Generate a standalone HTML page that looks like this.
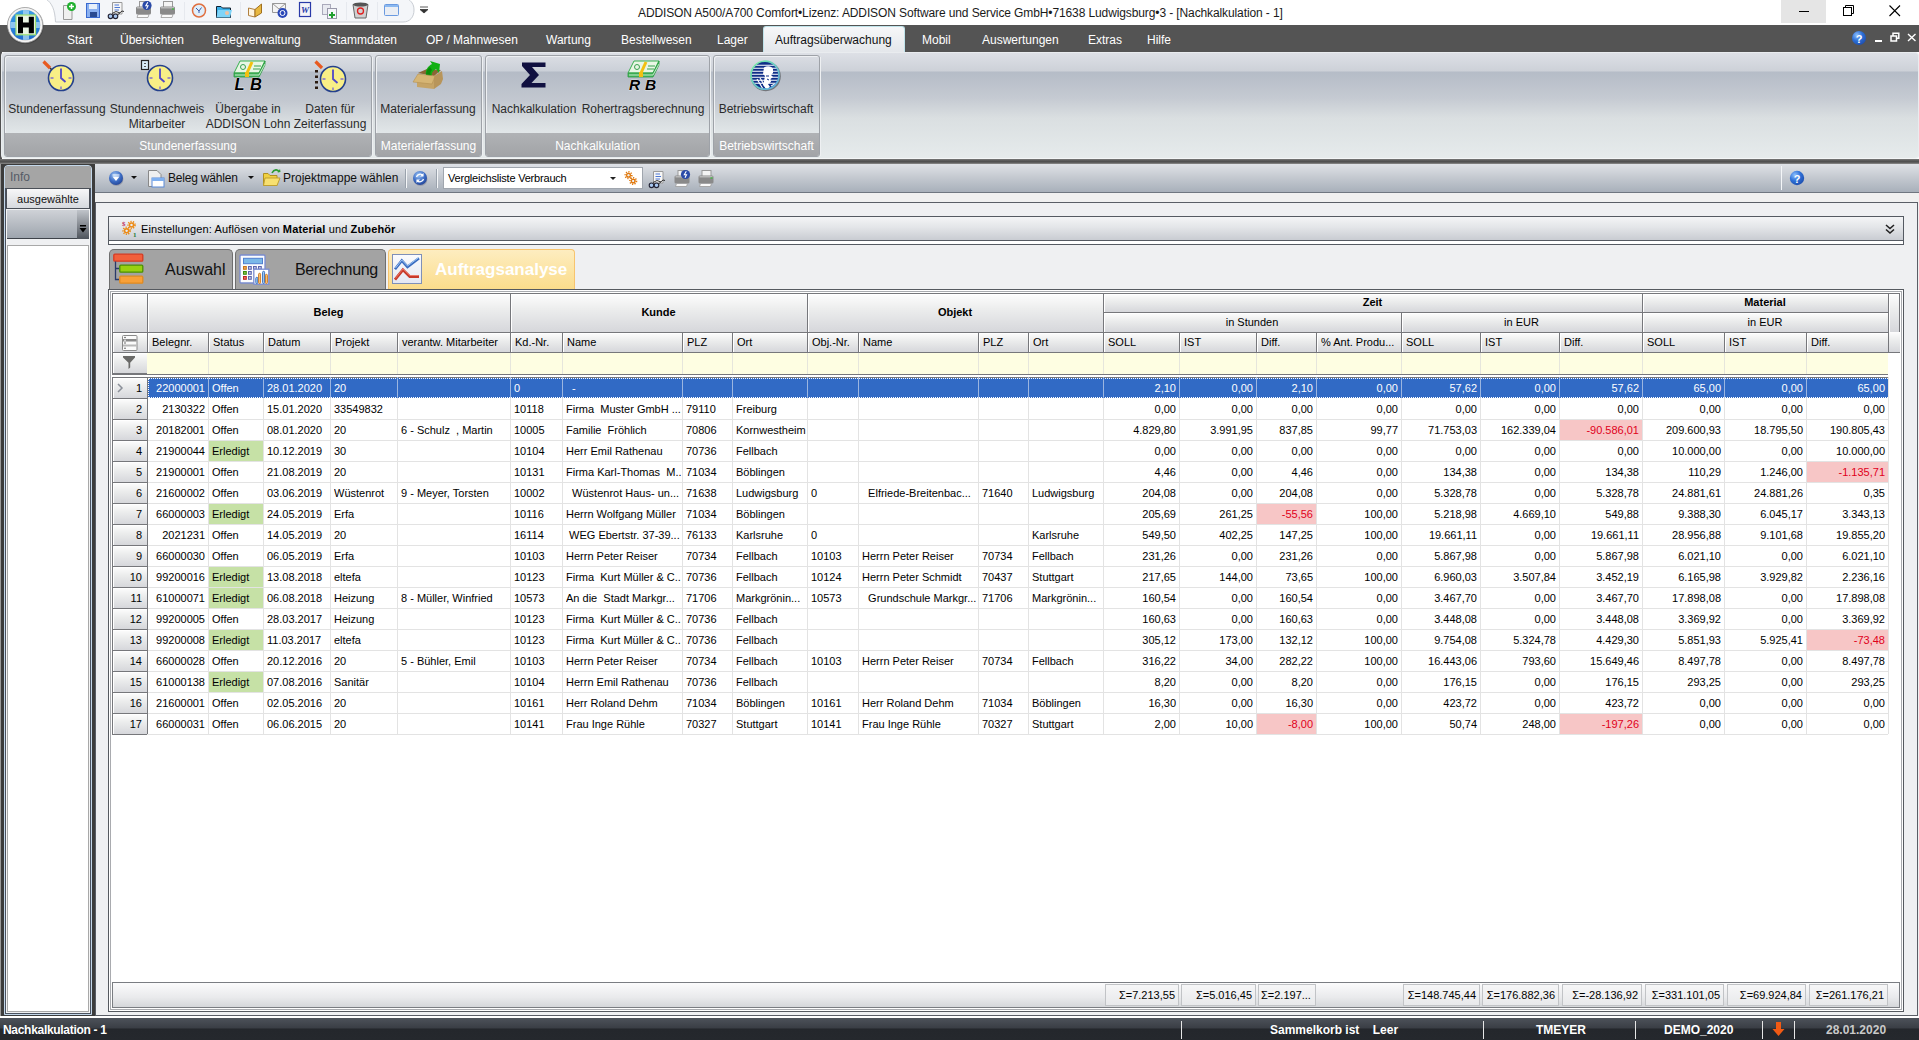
<!DOCTYPE html><html><head><meta charset="utf-8"><style>
*{margin:0;padding:0;box-sizing:border-box}
html,body{width:1919px;height:1040px;overflow:hidden;background:#fff;font-family:"Liberation Sans",sans-serif;position:relative}
.a{position:absolute}
.t{position:absolute;white-space:pre;line-height:1}
</style></head><body>
<div class="a" style="left:0;top:0;width:1919px;height:25px;background:#fff"></div>
<div class="t" style="left:638px;top:7px;font-size:12px;color:#1a1a1a;letter-spacing:-0.11px">ADDISON A500/A700 Comfort•Lizenz: ADDISON Software und Service GmbH•71638 Ludwigsburg•3 - [Nachkalkulation - 1]</div>
<div class="a" style="left:1781px;top:0;width:45px;height:23px;background:#e5e5e5"></div>
<div class="a" style="left:1799px;top:11px;width:10px;height:1px;background:#000"></div>
<svg class="a" style="left:1843px;top:5px" width="12" height="12"><rect x="0.5" y="2.5" width="8" height="8" fill="none" stroke="#000"/><path d="M2.5 2.5V0.5H10.5V8.5H8.5" fill="none" stroke="#000"/></svg>
<svg class="a" style="left:1889px;top:5px" width="12" height="12"><path d="M0.5 0.5L11 11M11 0.5L0.5 11" stroke="#000" stroke-width="1.1"/></svg>
<div class="a" style="left:0;top:25px;width:1919px;height:27px;background:#545454"></div>
<div class="t" style="left:67px;top:34px;font-size:12px;color:#fff">Start</div>
<div class="t" style="left:120px;top:34px;font-size:12px;color:#fff">Übersichten</div>
<div class="t" style="left:212px;top:34px;font-size:12px;color:#fff">Belegverwaltung</div>
<div class="t" style="left:329px;top:34px;font-size:12px;color:#fff">Stammdaten</div>
<div class="t" style="left:426px;top:34px;font-size:12px;color:#fff">OP / Mahnwesen</div>
<div class="t" style="left:546px;top:34px;font-size:12px;color:#fff">Wartung</div>
<div class="t" style="left:621px;top:34px;font-size:12px;color:#fff">Bestellwesen</div>
<div class="t" style="left:717px;top:34px;font-size:12px;color:#fff">Lager</div>
<div class="t" style="left:922px;top:34px;font-size:12px;color:#fff">Mobil</div>
<div class="t" style="left:982px;top:34px;font-size:12px;color:#fff">Auswertungen</div>
<div class="t" style="left:1088px;top:34px;font-size:12px;color:#fff">Extras</div>
<div class="t" style="left:1147px;top:34px;font-size:12px;color:#fff">Hilfe</div>
<div class="a" style="left:763px;top:26px;width:142px;height:27px;background:linear-gradient(#f6f7f9,#e3e6ea);border:1px solid #bfe3ea;border-bottom:none;border-radius:3px 3px 0 0"></div>
<div class="t" style="left:775px;top:34px;font-size:12px;color:#111">Auftragsüberwachung</div>
<svg class="a" style="left:1851px;top:30px" width="16" height="16"><defs><radialGradient id="hg" cx="0.35" cy="0.3" r="0.8"><stop offset="0" stop-color="#8ec0ff"/><stop offset="0.5" stop-color="#2d6fd6"/><stop offset="1" stop-color="#1c4aa8"/></radialGradient></defs><circle cx="8" cy="8" r="7" fill="url(#hg)"/><text x="8" y="12.5" font-size="11" font-weight="bold" text-anchor="middle" fill="#fff" font-family="Liberation Sans">?</text></svg>
<div class="a" style="left:1875px;top:40px;width:7px;height:2px;background:#fff"></div>
<svg class="a" style="left:1890px;top:32px" width="10" height="10"><rect x="1" y="4" width="5.5" height="5" fill="none" stroke="#fff" stroke-width="1.5"/><path d="M3 4V1.3H8.8V6.3H6.5" fill="none" stroke="#fff" stroke-width="1.5"/></svg>
<svg class="a" style="left:1907px;top:33px" width="10" height="9"><path d="M1 1L8.5 8M8.5 1L1 8" stroke="#fff" stroke-width="1.4"/></svg>
<div class="a" style="left:0;top:52px;width:2px;height:107px;background:#505050"></div>
<div class="a" style="left:1px;top:52px;width:1918px;height:107px;background:linear-gradient(#dde0e6 0px,#cdd1d8 18px,#b5bcc7 19px,#c5cad2 45px,#dadfe1 65px,#e6ebec 100%);border:1px solid #e9ecef;border-radius:4px;border-bottom:1px solid #f4f6f7"></div>
<div class="a" style="left:0;top:159px;width:1919px;height:5px;background:linear-gradient(#7a7a7a,#4e4e4e 45%,#5e5e5e 70%,#8e8e8e)"></div>
<div class="a" style="left:4px;top:55px;width:368px;height:102px;border:1px solid #9ea2a8;border-radius:3px;overflow:hidden;background:linear-gradient(#dadde3 0px,#cbd0d8 15px,#b4bbc6 16px,#c3c8d0 45px,#d8dde0 65px,#e2e7e9 78px);box-shadow:inset 1px 1px 0 #eef0f3"><div class="a" style="left:0;top:77px;width:100%;height:23px;background:linear-gradient(#b0b2b5,#a2a4a7)"></div><div class="t" style="left:0;width:100%;text-align:center;top:84px;font-size:12px;color:#fff">Stundenerfassung</div></div>
<div class="a" style="left:372px;top:57px;width:1px;height:99px;background:#eef0f2"></div>
<div class="a" style="left:375px;top:55px;width:107px;height:102px;border:1px solid #9ea2a8;border-radius:3px;overflow:hidden;background:linear-gradient(#dadde3 0px,#cbd0d8 15px,#b4bbc6 16px,#c3c8d0 45px,#d8dde0 65px,#e2e7e9 78px);box-shadow:inset 1px 1px 0 #eef0f3"><div class="a" style="left:0;top:77px;width:100%;height:23px;background:linear-gradient(#b0b2b5,#a2a4a7)"></div><div class="t" style="left:0;width:100%;text-align:center;top:84px;font-size:12px;color:#fff">Materialerfassung</div></div>
<div class="a" style="left:482px;top:57px;width:1px;height:99px;background:#eef0f2"></div>
<div class="a" style="left:485px;top:55px;width:225px;height:102px;border:1px solid #9ea2a8;border-radius:3px;overflow:hidden;background:linear-gradient(#dadde3 0px,#cbd0d8 15px,#b4bbc6 16px,#c3c8d0 45px,#d8dde0 65px,#e2e7e9 78px);box-shadow:inset 1px 1px 0 #eef0f3"><div class="a" style="left:0;top:77px;width:100%;height:23px;background:linear-gradient(#b0b2b5,#a2a4a7)"></div><div class="t" style="left:0;width:100%;text-align:center;top:84px;font-size:12px;color:#fff">Nachkalkulation</div></div>
<div class="a" style="left:710px;top:57px;width:1px;height:99px;background:#eef0f2"></div>
<div class="a" style="left:713px;top:55px;width:107px;height:102px;border:1px solid #9ea2a8;border-radius:3px;overflow:hidden;background:linear-gradient(#dadde3 0px,#cbd0d8 15px,#b4bbc6 16px,#c3c8d0 45px,#d8dde0 65px,#e2e7e9 78px);box-shadow:inset 1px 1px 0 #eef0f3"><div class="a" style="left:0;top:77px;width:100%;height:23px;background:linear-gradient(#b0b2b5,#a2a4a7)"></div><div class="t" style="left:0;width:100%;text-align:center;top:84px;font-size:12px;color:#fff">Betriebswirtschaft</div></div>
<div class="a" style="left:820px;top:57px;width:1px;height:99px;background:#eef0f2"></div>
<div class="t" style="left:-43px;width:200px;text-align:center;top:103px;font-size:12px;color:#2b2b2b">Stundenerfassung</div>
<div class="t" style="left:57px;width:200px;text-align:center;top:103px;font-size:12px;color:#2b2b2b">Stundennachweis</div>
<div class="t" style="left:57px;width:200px;text-align:center;top:118px;font-size:12px;color:#2b2b2b">Mitarbeiter</div>
<div class="t" style="left:148px;width:200px;text-align:center;top:103px;font-size:12px;color:#2b2b2b">Übergabe in</div>
<div class="t" style="left:148px;width:200px;text-align:center;top:118px;font-size:12px;color:#2b2b2b">ADDISON Lohn</div>
<div class="t" style="left:230px;width:200px;text-align:center;top:103px;font-size:12px;color:#2b2b2b">Daten für</div>
<div class="t" style="left:230px;width:200px;text-align:center;top:118px;font-size:12px;color:#2b2b2b">Zeiterfassung</div>
<div class="t" style="left:328px;width:200px;text-align:center;top:103px;font-size:12px;color:#2b2b2b">Materialerfassung</div>
<div class="t" style="left:434px;width:200px;text-align:center;top:103px;font-size:12px;color:#2b2b2b">Nachkalkulation</div>
<div class="t" style="left:543px;width:200px;text-align:center;top:103px;font-size:12px;color:#2b2b2b">Rohertragsberechnung</div>
<div class="t" style="left:666px;width:200px;text-align:center;top:103px;font-size:12px;color:#2b2b2b">Betriebswirtschaft</div>
<div class="a" style="left:0;top:164px;width:95px;height:852px;background:#3c3c3c"></div>
<div class="a" style="left:0;top:164px;width:1px;height:852px;background:#9a9a9a"></div>
<div class="a" style="left:4px;top:165px;width:88px;height:850px;background:#eff0f2;border:1px solid #c3d7ea;border-radius:4px 4px 0 0;box-shadow:inset 1px 0 0 #4a5260,inset -1px 0 0 #4a5260,inset 0 -1px 0 #4a5260,inset 2px 0 0 #f4f4f4,inset -2px 0 0 #f4f4f4"></div>
<div class="a" style="left:5px;top:166px;width:86px;height:22px;background:#a5a5a5;border-radius:3px 3px 0 0"></div>
<div class="t" style="left:10px;top:171px;font-size:12px;color:#555b66">Info</div>
<div class="a" style="left:6px;top:188px;width:84px;height:21px;background:linear-gradient(#f7f7f8,#d6d9de);border:1px solid #4a4f57"></div>
<div class="t" style="left:6px;width:84px;text-align:center;top:194px;font-size:11px;color:#111">ausgewählte</div>
<div class="a" style="left:7px;top:210px;width:82px;height:29px;background:linear-gradient(#cfd2d7,#9ea5ae);border-bottom:1px solid #3e434a"></div>
<div class="a" style="left:77px;top:210px;width:12px;height:29px;background:linear-gradient(#c0c4ca,#4e545c)"></div>
<svg class="a" style="left:79px;top:225px" width="8" height="9"><rect x="1" y="0" width="6" height="1.5" fill="#000"/><path d="M0.5 3H7.5L4 7.5Z" fill="#000"/></svg>
<div class="a" style="left:7px;top:245px;width:82px;height:767px;background:#fff;border:1px solid #a8a8a8"></div>
<div class="a" style="left:95px;top:164px;width:1824px;height:29px;background:linear-gradient(#dfe2e7,#c3c8cf 50%,#a8b0ba);border-bottom:1px solid #6f7680"></div>
<div class="a" style="left:95px;top:193px;width:1824px;height:825px;background:#f0f0f0"></div>
<div class="a" style="left:95px;top:202px;width:1823px;height:814px;background:#eff0f2;border:1px solid #5a5e66;border-right:1px solid #5a5e66"></div>
<div class="a" style="left:0;top:1016px;width:1919px;height:2px;background:#fff"></div>
<div class="a" style="left:0;top:1018px;width:1919px;height:22px;background:linear-gradient(#4d525a,#3a3e45 45%,#24272c 50%,#25282d)"></div>
<div class="t" style="left:3px;top:1024px;font-size:12px;font-weight:bold;color:#fff;letter-spacing:-0.3px">Nachkalkulation - 1</div>
<div class="a" style="left:1181px;top:1021px;width:1px;height:18px;background:#e6e6e6"></div>
<div class="a" style="left:1483px;top:1021px;width:1px;height:18px;background:#e6e6e6"></div>
<div class="a" style="left:1635px;top:1021px;width:1px;height:18px;background:#e6e6e6"></div>
<div class="a" style="left:1762px;top:1021px;width:1px;height:18px;background:#e6e6e6"></div>
<div class="a" style="left:1794px;top:1021px;width:1px;height:18px;background:#e6e6e6"></div>
<div class="t" style="left:1270px;top:1024px;font-size:12px;font-weight:bold;color:#fff">Sammelkorb ist&nbsp;&nbsp;&nbsp; Leer</div>
<div class="t" style="left:1536px;top:1024px;font-size:12px;font-weight:bold;color:#fff">TMEYER</div>
<div class="t" style="left:1664px;top:1024px;font-size:12px;font-weight:bold;color:#fff">DEMO_2020</div>
<svg class="a" style="left:1772px;top:1021px" width="13" height="16"><path d="M4 1H9V8H12.5L6.5 15L0.5 8H4Z" fill="#f25a14"/></svg>
<div class="t" style="left:1826px;top:1024px;font-size:12px;font-weight:bold;color:#c9c9c9">28.01.2020</div>
<div class="a" style="left:108px;top:216px;width:1796px;height:29px;background:#fff;border:1px solid #555a62"></div>
<div class="a" style="left:109px;top:217px;width:1794px;height:24px;background:linear-gradient(#f4f5f6,#e3e5e8 45%,#c9ccd2);border-bottom:1px solid #555a62"></div>
<div class="t" style="left:141px;top:224px;font-size:11px;color:#000;letter-spacing:0.13px">Einstellungen: Auflösen von <b>Material</b> und <b>Zubehör</b></div>
<svg class="a" style="left:1885px;top:224px" width="10" height="11"><path d="M1 1L5 4.5L9 1M1 5.5L5 9L9 5.5" fill="none" stroke="#222" stroke-width="1.6"/></svg>
<svg class="a" style="left:119px;top:219px" width="18" height="18"><text x="3" y="7" font-size="7" fill="#c03060" font-family="Liberation Serif" font-weight="bold">$</text><circle cx="12.5" cy="6" r="3.5" fill="none" stroke="#ec8a14" stroke-width="1.6" stroke-dasharray="1.2 1.3"/><circle cx="12.5" cy="6" r="1.944" fill="none" stroke="#ec8a14" stroke-width="1.62"/><circle cx="12.5" cy="6" r="1.026" fill="#e8eef8"/><circle cx="7.6" cy="11.8" r="3.5" fill="none" stroke="#ec8a14" stroke-width="1.6" stroke-dasharray="1.2 1.3"/><circle cx="7.6" cy="11.8" r="1.944" fill="none" stroke="#ec8a14" stroke-width="1.62"/><circle cx="7.6" cy="11.8" r="1.026" fill="#e8eef8"/><text x="14" y="17.5" font-size="7" fill="#2a7a3a" font-family="Liberation Serif" font-weight="bold">1</text></svg>
<div class="a" style="left:109px;top:249px;width:124px;height:41px;background:#a3a3a3;border:1px solid #6e6e6e;border-bottom:none;border-radius:5px 5px 0 0"></div>
<div class="t" style="left:165px;top:262px;font-size:16px;color:#111">Auswahl</div>
<svg class="a" style="left:113px;top:253px" width="32" height="32"><rect x="0.8" y="1.2" width="29" height="7" rx="1" fill="#f2603c" stroke="#d83a22" stroke-width="1.3"/><rect x="6.8" y="12.2" width="23" height="7" rx="1" fill="#98d010" stroke="#4a9000" stroke-width="1.3"/><rect x="6.8" y="23.2" width="23" height="7" rx="1" fill="#f8a038" stroke="#e08a20" stroke-width="1.3"/><path d="M2.5 8.5V26.5H6M2.5 15.5H6" fill="none" stroke="#2a3a6a" stroke-width="1.3"/></svg>
<div class="a" style="left:235px;top:249px;width:151px;height:41px;background:#a3a3a3;border:1px solid #6e6e6e;border-bottom:none;border-radius:5px 5px 0 0"></div>
<div class="t" style="left:295px;top:262px;font-size:16px;color:#111;letter-spacing:-0.35px">Berechnung</div>
<svg class="a" style="left:239px;top:254px" width="32" height="32"><rect x="1" y="1" width="25" height="28" rx="1" fill="#fbfcfe" stroke="#7a8cd0" stroke-width="1.3"/><rect x="4.5" y="4.3" width="19" height="5.4" fill="#7ab8e8" stroke="#5080d0"/><g stroke-width="1.2"><rect x="4.6" y="12.6" width="2.6" height="2.6" fill="#f8d080" stroke="#c87018"/><rect x="9.6" y="12.6" width="2.6" height="2.6" fill="#fff" stroke="#5a64b0"/><rect x="14.6" y="12.6" width="2.6" height="2.6" fill="#fff" stroke="#5a64b0"/><rect x="19.6" y="12.6" width="2.6" height="2.6" fill="#fff" stroke="#5a64b0"/><rect x="4.6" y="17.6" width="2.6" height="2.6" fill="#b0e060" stroke="#3a8a10"/><rect x="9.6" y="17.6" width="2.6" height="2.6" fill="#fff" stroke="#5a64b0"/><rect x="4.6" y="22.6" width="2.6" height="2.6" fill="#f8a090" stroke="#c02020"/><rect x="9.6" y="22.6" width="2.6" height="2.6" fill="#fff" stroke="#5a64b0"/></g><rect x="14.8" y="15.2" width="15" height="15" fill="#fff" stroke="#7a8cd0" stroke-width="1.3"/><g stroke-width="1"><rect x="16.8" y="23.3" width="2" height="6.2" rx="1" fill="#a8d0f0" stroke="#3a70c0"/><rect x="19.6" y="19.3" width="2" height="10.2" rx="1" fill="#f8c880" stroke="#d07a20"/><rect x="23.6" y="17.3" width="2" height="12.2" rx="1" fill="#a8d0f0" stroke="#3a70c0"/><rect x="26.4" y="20.3" width="2" height="9.2" rx="1" fill="#f8c880" stroke="#d07a20"/></g></svg>
<div class="a" style="left:388px;top:249px;width:187px;height:41px;background:linear-gradient(#fdedc0,#fbdc8a);border:1px solid #f7c46e;border-bottom:none;border-radius:4px 4px 0 0"></div>
<div class="t" style="left:435px;top:261px;font-size:17px;font-weight:bold;color:#fff">Auftragsanalyse</div>
<svg class="a" style="left:391px;top:254px" width="32" height="32"><defs><linearGradient id="aag" x1="0" y1="0" x2="0" y2="1"><stop offset="0" stop-color="#fafbfd"/><stop offset="1" stop-color="#e4e8f2"/></linearGradient></defs><rect x="1.5" y="0.5" width="29" height="29" fill="url(#aag)" stroke="#7f90b8"/><path d="M4 15.2L10.8 6.6L16.5 12.9L28 4.3" fill="none" stroke="#3a6cc0" stroke-width="2.6"/><path d="M4.5 14L10.8 6L16.5 12L27.5 3.8" fill="none" stroke="#a8d0f8" stroke-width="0.9"/><path d="M4 25.6L11.9 15.8L18.8 22.7H28" fill="none" stroke="#c83a2a" stroke-width="2.8"/><path d="M4.5 24.3L11.9 15L18.8 21.5H27.5" fill="none" stroke="#f08070" stroke-width="0.8"/></svg>
<div class="a" style="left:108px;top:289px;width:1796px;height:723px;background:#fff;border:1px solid #55595f"></div>
<div class="a" style="left:110px;top:291px;width:1792px;height:719px;border:1px solid #a9abaf"></div>
<div class="a" style="left:112px;top:293px;width:36px;height:40px;background:linear-gradient(#fdfdfd,#eceded 40%,#d6d7db);border:1px solid #76777b;box-shadow:inset 1px 1px 0 #fff"></div>
<div class="a" style="left:147px;top:293px;width:364px;height:40px;background:linear-gradient(#fdfdfd,#eceded 40%,#d6d7db);border:1px solid #76777b;box-shadow:inset 1px 1px 0 #fff"></div><div class="t" style="left:147px;width:363px;text-align:center;top:307px;font-size:11px;color:#000;font-weight:bold">Beleg</div>
<div class="a" style="left:510px;top:293px;width:298px;height:40px;background:linear-gradient(#fdfdfd,#eceded 40%,#d6d7db);border:1px solid #76777b;box-shadow:inset 1px 1px 0 #fff"></div><div class="t" style="left:510px;width:297px;text-align:center;top:307px;font-size:11px;color:#000;font-weight:bold">Kunde</div>
<div class="a" style="left:807px;top:293px;width:297px;height:40px;background:linear-gradient(#fdfdfd,#eceded 40%,#d6d7db);border:1px solid #76777b;box-shadow:inset 1px 1px 0 #fff"></div><div class="t" style="left:807px;width:296px;text-align:center;top:307px;font-size:11px;color:#000;font-weight:bold">Objekt</div>
<div class="a" style="left:1103px;top:293px;width:540px;height:20px;background:linear-gradient(#fdfdfd,#eceded 40%,#d6d7db);border:1px solid #76777b;box-shadow:inset 1px 1px 0 #fff"></div><div class="t" style="left:1103px;width:539px;text-align:center;top:297px;font-size:11px;color:#000;font-weight:bold">Zeit</div>
<div class="a" style="left:1103px;top:312px;width:299px;height:21px;background:linear-gradient(#fdfdfd,#eceded 40%,#d6d7db);border:1px solid #76777b;box-shadow:inset 1px 1px 0 #fff"></div><div class="t" style="left:1103px;width:298px;text-align:center;top:317px;font-size:11px;color:#000;">in Stunden</div>
<div class="a" style="left:1401px;top:312px;width:242px;height:21px;background:linear-gradient(#fdfdfd,#eceded 40%,#d6d7db);border:1px solid #76777b;box-shadow:inset 1px 1px 0 #fff"></div><div class="t" style="left:1401px;width:241px;text-align:center;top:317px;font-size:11px;color:#000;">in EUR</div>
<div class="a" style="left:1642px;top:293px;width:247px;height:20px;background:linear-gradient(#fdfdfd,#eceded 40%,#d6d7db);border:1px solid #76777b;box-shadow:inset 1px 1px 0 #fff"></div><div class="t" style="left:1642px;width:246px;text-align:center;top:297px;font-size:11px;color:#000;font-weight:bold">Material</div>
<div class="a" style="left:1642px;top:312px;width:247px;height:21px;background:linear-gradient(#fdfdfd,#eceded 40%,#d6d7db);border:1px solid #76777b;box-shadow:inset 1px 1px 0 #fff"></div><div class="t" style="left:1642px;width:246px;text-align:center;top:317px;font-size:11px;color:#000;">in EUR</div>
<div class="a" style="left:1888px;top:293px;width:12px;height:40px;background:linear-gradient(#fdfdfd,#eceded 40%,#d6d7db);border:1px solid #76777b;box-shadow:inset 1px 1px 0 #fff"></div>
<div class="a" style="left:112px;top:332px;width:36px;height:21px;background:linear-gradient(#fdfdfd,#eceded 40%,#d6d7db);border:1px solid #76777b;box-shadow:inset 1px 1px 0 #fff"></div>
<div class="a" style="left:147px;top:332px;width:62px;height:21px;background:linear-gradient(#fdfdfd,#eceded 40%,#d6d7db);border:1px solid #76777b;box-shadow:inset 1px 1px 0 #fff"></div><div class="t" style="left:152px;top:337px;font-size:11px;color:#000">Belegnr.</div>
<div class="a" style="left:208px;top:332px;width:56px;height:21px;background:linear-gradient(#fdfdfd,#eceded 40%,#d6d7db);border:1px solid #76777b;box-shadow:inset 1px 1px 0 #fff"></div><div class="t" style="left:213px;top:337px;font-size:11px;color:#000">Status</div>
<div class="a" style="left:263px;top:332px;width:68px;height:21px;background:linear-gradient(#fdfdfd,#eceded 40%,#d6d7db);border:1px solid #76777b;box-shadow:inset 1px 1px 0 #fff"></div><div class="t" style="left:268px;top:337px;font-size:11px;color:#000">Datum</div>
<div class="a" style="left:330px;top:332px;width:68px;height:21px;background:linear-gradient(#fdfdfd,#eceded 40%,#d6d7db);border:1px solid #76777b;box-shadow:inset 1px 1px 0 #fff"></div><div class="t" style="left:335px;top:337px;font-size:11px;color:#000">Projekt</div>
<div class="a" style="left:397px;top:332px;width:114px;height:21px;background:linear-gradient(#fdfdfd,#eceded 40%,#d6d7db);border:1px solid #76777b;box-shadow:inset 1px 1px 0 #fff"></div><div class="t" style="left:402px;top:337px;font-size:11px;color:#000">verantw. Mitarbeiter</div>
<div class="a" style="left:510px;top:332px;width:53px;height:21px;background:linear-gradient(#fdfdfd,#eceded 40%,#d6d7db);border:1px solid #76777b;box-shadow:inset 1px 1px 0 #fff"></div><div class="t" style="left:515px;top:337px;font-size:11px;color:#000">Kd.-Nr.</div>
<div class="a" style="left:562px;top:332px;width:121px;height:21px;background:linear-gradient(#fdfdfd,#eceded 40%,#d6d7db);border:1px solid #76777b;box-shadow:inset 1px 1px 0 #fff"></div><div class="t" style="left:567px;top:337px;font-size:11px;color:#000">Name</div>
<div class="a" style="left:682px;top:332px;width:51px;height:21px;background:linear-gradient(#fdfdfd,#eceded 40%,#d6d7db);border:1px solid #76777b;box-shadow:inset 1px 1px 0 #fff"></div><div class="t" style="left:687px;top:337px;font-size:11px;color:#000">PLZ</div>
<div class="a" style="left:732px;top:332px;width:76px;height:21px;background:linear-gradient(#fdfdfd,#eceded 40%,#d6d7db);border:1px solid #76777b;box-shadow:inset 1px 1px 0 #fff"></div><div class="t" style="left:737px;top:337px;font-size:11px;color:#000">Ort</div>
<div class="a" style="left:807px;top:332px;width:52px;height:21px;background:linear-gradient(#fdfdfd,#eceded 40%,#d6d7db);border:1px solid #76777b;box-shadow:inset 1px 1px 0 #fff"></div><div class="t" style="left:812px;top:337px;font-size:11px;color:#000">Obj.-Nr.</div>
<div class="a" style="left:858px;top:332px;width:121px;height:21px;background:linear-gradient(#fdfdfd,#eceded 40%,#d6d7db);border:1px solid #76777b;box-shadow:inset 1px 1px 0 #fff"></div><div class="t" style="left:863px;top:337px;font-size:11px;color:#000">Name</div>
<div class="a" style="left:978px;top:332px;width:51px;height:21px;background:linear-gradient(#fdfdfd,#eceded 40%,#d6d7db);border:1px solid #76777b;box-shadow:inset 1px 1px 0 #fff"></div><div class="t" style="left:983px;top:337px;font-size:11px;color:#000">PLZ</div>
<div class="a" style="left:1028px;top:332px;width:76px;height:21px;background:linear-gradient(#fdfdfd,#eceded 40%,#d6d7db);border:1px solid #76777b;box-shadow:inset 1px 1px 0 #fff"></div><div class="t" style="left:1033px;top:337px;font-size:11px;color:#000">Ort</div>
<div class="a" style="left:1103px;top:332px;width:77px;height:21px;background:linear-gradient(#fdfdfd,#eceded 40%,#d6d7db);border:1px solid #76777b;box-shadow:inset 1px 1px 0 #fff"></div><div class="t" style="left:1108px;top:337px;font-size:11px;color:#000">SOLL</div>
<div class="a" style="left:1179px;top:332px;width:78px;height:21px;background:linear-gradient(#fdfdfd,#eceded 40%,#d6d7db);border:1px solid #76777b;box-shadow:inset 1px 1px 0 #fff"></div><div class="t" style="left:1184px;top:337px;font-size:11px;color:#000">IST</div>
<div class="a" style="left:1256px;top:332px;width:61px;height:21px;background:linear-gradient(#fdfdfd,#eceded 40%,#d6d7db);border:1px solid #76777b;box-shadow:inset 1px 1px 0 #fff"></div><div class="t" style="left:1261px;top:337px;font-size:11px;color:#000">Diff.</div>
<div class="a" style="left:1316px;top:332px;width:86px;height:21px;background:linear-gradient(#fdfdfd,#eceded 40%,#d6d7db);border:1px solid #76777b;box-shadow:inset 1px 1px 0 #fff"></div><div class="t" style="left:1321px;top:337px;font-size:11px;color:#000">% Ant. Produ...</div>
<div class="a" style="left:1401px;top:332px;width:80px;height:21px;background:linear-gradient(#fdfdfd,#eceded 40%,#d6d7db);border:1px solid #76777b;box-shadow:inset 1px 1px 0 #fff"></div><div class="t" style="left:1406px;top:337px;font-size:11px;color:#000">SOLL</div>
<div class="a" style="left:1480px;top:332px;width:80px;height:21px;background:linear-gradient(#fdfdfd,#eceded 40%,#d6d7db);border:1px solid #76777b;box-shadow:inset 1px 1px 0 #fff"></div><div class="t" style="left:1485px;top:337px;font-size:11px;color:#000">IST</div>
<div class="a" style="left:1559px;top:332px;width:84px;height:21px;background:linear-gradient(#fdfdfd,#eceded 40%,#d6d7db);border:1px solid #76777b;box-shadow:inset 1px 1px 0 #fff"></div><div class="t" style="left:1564px;top:337px;font-size:11px;color:#000">Diff.</div>
<div class="a" style="left:1642px;top:332px;width:83px;height:21px;background:linear-gradient(#fdfdfd,#eceded 40%,#d6d7db);border:1px solid #76777b;box-shadow:inset 1px 1px 0 #fff"></div><div class="t" style="left:1647px;top:337px;font-size:11px;color:#000">SOLL</div>
<div class="a" style="left:1724px;top:332px;width:83px;height:21px;background:linear-gradient(#fdfdfd,#eceded 40%,#d6d7db);border:1px solid #76777b;box-shadow:inset 1px 1px 0 #fff"></div><div class="t" style="left:1729px;top:337px;font-size:11px;color:#000">IST</div>
<div class="a" style="left:1806px;top:332px;width:83px;height:21px;background:linear-gradient(#fdfdfd,#eceded 40%,#d6d7db);border:1px solid #76777b;box-shadow:inset 1px 1px 0 #fff"></div><div class="t" style="left:1811px;top:337px;font-size:11px;color:#000">Diff.</div>
<div class="a" style="left:1888px;top:332px;width:12px;height:21px;background:linear-gradient(#fdfdfd,#eceded 40%,#d6d7db);border-left:1px solid #76777b;border-bottom:1px solid #76777b"></div>
<svg class="a" style="left:121px;top:334px" width="17" height="17"><rect x="1.5" y="1.5" width="14.5" height="15" rx="1" fill="#fbfbfb" stroke="#8a8a8a"/><rect x="2" y="5" width="13.5" height="2.5" fill="#8a8a8a"/><rect x="2" y="10.5" width="13.5" height="2" fill="#b8b8b8"/><g fill="#555"><circle cx="4" cy="3.5" r="0.8"/><circle cx="4" cy="6.3" r="0.8" fill="#fff"/><circle cx="4" cy="9" r="0.8"/><circle cx="4" cy="14.3" r="0.8"/></g></svg>
<div class="a" style="left:112px;top:352px;width:36px;height:22px;background:linear-gradient(#fdfdfd,#eceded 40%,#d6d7db);border:1px solid #76777b;box-shadow:inset 1px 1px 0 #fff"></div>
<svg class="a" style="left:121px;top:355px" width="16" height="16"><path d="M2 1H14V2.5L9.2 7.7V12.5L7.5 14V7.7L2 2.5Z" fill="#6a6a68"/></svg>
<div class="a" style="left:147px;top:353px;width:1741px;height:21px;background:#fefee2"></div>
<div class="a" style="left:208px;top:353px;width:1px;height:21px;background:#e6e6dc"></div>
<div class="a" style="left:263px;top:353px;width:1px;height:21px;background:#e6e6dc"></div>
<div class="a" style="left:330px;top:353px;width:1px;height:21px;background:#e6e6dc"></div>
<div class="a" style="left:397px;top:353px;width:1px;height:21px;background:#e6e6dc"></div>
<div class="a" style="left:510px;top:353px;width:1px;height:21px;background:#e6e6dc"></div>
<div class="a" style="left:562px;top:353px;width:1px;height:21px;background:#e6e6dc"></div>
<div class="a" style="left:682px;top:353px;width:1px;height:21px;background:#e6e6dc"></div>
<div class="a" style="left:732px;top:353px;width:1px;height:21px;background:#e6e6dc"></div>
<div class="a" style="left:807px;top:353px;width:1px;height:21px;background:#e6e6dc"></div>
<div class="a" style="left:858px;top:353px;width:1px;height:21px;background:#e6e6dc"></div>
<div class="a" style="left:978px;top:353px;width:1px;height:21px;background:#e6e6dc"></div>
<div class="a" style="left:1028px;top:353px;width:1px;height:21px;background:#e6e6dc"></div>
<div class="a" style="left:1103px;top:353px;width:1px;height:21px;background:#e6e6dc"></div>
<div class="a" style="left:1179px;top:353px;width:1px;height:21px;background:#e6e6dc"></div>
<div class="a" style="left:1256px;top:353px;width:1px;height:21px;background:#e6e6dc"></div>
<div class="a" style="left:1316px;top:353px;width:1px;height:21px;background:#e6e6dc"></div>
<div class="a" style="left:1401px;top:353px;width:1px;height:21px;background:#e6e6dc"></div>
<div class="a" style="left:1480px;top:353px;width:1px;height:21px;background:#e6e6dc"></div>
<div class="a" style="left:1559px;top:353px;width:1px;height:21px;background:#e6e6dc"></div>
<div class="a" style="left:1642px;top:353px;width:1px;height:21px;background:#e6e6dc"></div>
<div class="a" style="left:1724px;top:353px;width:1px;height:21px;background:#e6e6dc"></div>
<div class="a" style="left:1806px;top:353px;width:1px;height:21px;background:#e6e6dc"></div>
<div class="a" style="left:112px;top:374px;width:1776px;height:4px;border-top:1px solid #76777b;border-bottom:1px solid #76777b;background:#fff"></div>
<div class="a" style="left:112px;top:377px;width:36px;height:22px;background:linear-gradient(#fdfdfd,#eceded 40%,#d6d7db);border:1px solid #76777b;box-shadow:inset 1px 1px 0 #fff"></div>
<div class="t" style="left:112px;width:30px;text-align:right;top:383px;font-size:11px;color:#000">1</div>
<svg class="a" style="left:117px;top:383px" width="7" height="10"><path d="M1 1L5 5L1 9" fill="none" stroke="#8a8f98" stroke-width="1.5"/></svg>
<div class="a" style="left:148px;top:378px;width:1740px;height:20px;background:#316ac5;border-top:1px dotted #fff;border-bottom:1px dotted #fff;border-left:1px dotted #fff"></div>
<div class="t" style="left:147px;width:58px;text-align:right;top:383px;font-size:11px;color:#fff">22000001</div>
<div class="a" style="left:208px;top:377px;width:1px;height:21px;background:#9bb5e0"></div>
<div class="t" style="left:212px;width:50px;overflow:hidden;top:383px;font-size:11px;color:#fff">Offen</div>
<div class="a" style="left:263px;top:377px;width:1px;height:21px;background:#9bb5e0"></div>
<div class="t" style="left:267px;width:62px;overflow:hidden;top:383px;font-size:11px;color:#fff">28.01.2020</div>
<div class="a" style="left:330px;top:377px;width:1px;height:21px;background:#9bb5e0"></div>
<div class="t" style="left:334px;width:62px;overflow:hidden;top:383px;font-size:11px;color:#fff">20</div>
<div class="a" style="left:397px;top:377px;width:1px;height:21px;background:#9bb5e0"></div>
<div class="a" style="left:510px;top:377px;width:1px;height:21px;background:#9bb5e0"></div>
<div class="t" style="left:514px;width:47px;overflow:hidden;top:383px;font-size:11px;color:#fff">0</div>
<div class="a" style="left:562px;top:377px;width:1px;height:21px;background:#9bb5e0"></div>
<div class="t" style="left:566px;width:115px;overflow:hidden;top:383px;font-size:11px;color:#fff">  -</div>
<div class="a" style="left:682px;top:377px;width:1px;height:21px;background:#9bb5e0"></div>
<div class="a" style="left:732px;top:377px;width:1px;height:21px;background:#9bb5e0"></div>
<div class="a" style="left:807px;top:377px;width:1px;height:21px;background:#9bb5e0"></div>
<div class="a" style="left:858px;top:377px;width:1px;height:21px;background:#9bb5e0"></div>
<div class="a" style="left:978px;top:377px;width:1px;height:21px;background:#9bb5e0"></div>
<div class="a" style="left:1028px;top:377px;width:1px;height:21px;background:#9bb5e0"></div>
<div class="a" style="left:1103px;top:377px;width:1px;height:21px;background:#9bb5e0"></div>
<div class="t" style="left:1103px;width:73px;text-align:right;top:383px;font-size:11px;color:#fff">2,10</div>
<div class="a" style="left:1179px;top:377px;width:1px;height:21px;background:#9bb5e0"></div>
<div class="t" style="left:1179px;width:74px;text-align:right;top:383px;font-size:11px;color:#fff">0,00</div>
<div class="a" style="left:1256px;top:377px;width:1px;height:21px;background:#9bb5e0"></div>
<div class="t" style="left:1256px;width:57px;text-align:right;top:383px;font-size:11px;color:#fff">2,10</div>
<div class="a" style="left:1316px;top:377px;width:1px;height:21px;background:#9bb5e0"></div>
<div class="t" style="left:1316px;width:82px;text-align:right;top:383px;font-size:11px;color:#fff">0,00</div>
<div class="a" style="left:1401px;top:377px;width:1px;height:21px;background:#9bb5e0"></div>
<div class="t" style="left:1401px;width:76px;text-align:right;top:383px;font-size:11px;color:#fff">57,62</div>
<div class="a" style="left:1480px;top:377px;width:1px;height:21px;background:#9bb5e0"></div>
<div class="t" style="left:1480px;width:76px;text-align:right;top:383px;font-size:11px;color:#fff">0,00</div>
<div class="a" style="left:1559px;top:377px;width:1px;height:21px;background:#9bb5e0"></div>
<div class="t" style="left:1559px;width:80px;text-align:right;top:383px;font-size:11px;color:#fff">57,62</div>
<div class="a" style="left:1642px;top:377px;width:1px;height:21px;background:#9bb5e0"></div>
<div class="t" style="left:1642px;width:79px;text-align:right;top:383px;font-size:11px;color:#fff">65,00</div>
<div class="a" style="left:1724px;top:377px;width:1px;height:21px;background:#9bb5e0"></div>
<div class="t" style="left:1724px;width:79px;text-align:right;top:383px;font-size:11px;color:#fff">0,00</div>
<div class="a" style="left:1806px;top:377px;width:1px;height:21px;background:#9bb5e0"></div>
<div class="t" style="left:1806px;width:79px;text-align:right;top:383px;font-size:11px;color:#fff">65,00</div>
<div class="a" style="left:1888px;top:377px;width:1px;height:21px;background:#e3e3e3"></div>
<div class="a" style="left:112px;top:398px;width:36px;height:22px;background:linear-gradient(#fdfdfd,#eceded 40%,#d6d7db);border:1px solid #76777b;box-shadow:inset 1px 1px 0 #fff"></div>
<div class="t" style="left:112px;width:30px;text-align:right;top:404px;font-size:11px;color:#000">2</div>
<div class="a" style="left:147px;top:419px;width:1741px;height:1px;background:#e3e3e3"></div>
<div class="t" style="left:147px;width:58px;text-align:right;top:404px;font-size:11px;color:#000">2130322</div>
<div class="a" style="left:208px;top:398px;width:1px;height:21px;background:#e3e3e3"></div>
<div class="t" style="left:212px;width:50px;overflow:hidden;top:404px;font-size:11px;color:#000">Offen</div>
<div class="a" style="left:263px;top:398px;width:1px;height:21px;background:#e3e3e3"></div>
<div class="t" style="left:267px;width:62px;overflow:hidden;top:404px;font-size:11px;color:#000">15.01.2020</div>
<div class="a" style="left:330px;top:398px;width:1px;height:21px;background:#e3e3e3"></div>
<div class="t" style="left:334px;width:62px;overflow:hidden;top:404px;font-size:11px;color:#000">33549832</div>
<div class="a" style="left:397px;top:398px;width:1px;height:21px;background:#e3e3e3"></div>
<div class="a" style="left:510px;top:398px;width:1px;height:21px;background:#e3e3e3"></div>
<div class="t" style="left:514px;width:47px;overflow:hidden;top:404px;font-size:11px;color:#000">10118</div>
<div class="a" style="left:562px;top:398px;width:1px;height:21px;background:#e3e3e3"></div>
<div class="t" style="left:566px;width:115px;overflow:hidden;top:404px;font-size:11px;color:#000">Firma  Muster GmbH ...</div>
<div class="a" style="left:682px;top:398px;width:1px;height:21px;background:#e3e3e3"></div>
<div class="t" style="left:686px;width:45px;overflow:hidden;top:404px;font-size:11px;color:#000">79110</div>
<div class="a" style="left:732px;top:398px;width:1px;height:21px;background:#e3e3e3"></div>
<div class="t" style="left:736px;width:70px;overflow:hidden;top:404px;font-size:11px;color:#000">Freiburg</div>
<div class="a" style="left:807px;top:398px;width:1px;height:21px;background:#e3e3e3"></div>
<div class="a" style="left:858px;top:398px;width:1px;height:21px;background:#e3e3e3"></div>
<div class="a" style="left:978px;top:398px;width:1px;height:21px;background:#e3e3e3"></div>
<div class="a" style="left:1028px;top:398px;width:1px;height:21px;background:#e3e3e3"></div>
<div class="a" style="left:1103px;top:398px;width:1px;height:21px;background:#e3e3e3"></div>
<div class="t" style="left:1103px;width:73px;text-align:right;top:404px;font-size:11px;color:#000">0,00</div>
<div class="a" style="left:1179px;top:398px;width:1px;height:21px;background:#e3e3e3"></div>
<div class="t" style="left:1179px;width:74px;text-align:right;top:404px;font-size:11px;color:#000">0,00</div>
<div class="a" style="left:1256px;top:398px;width:1px;height:21px;background:#e3e3e3"></div>
<div class="t" style="left:1256px;width:57px;text-align:right;top:404px;font-size:11px;color:#000">0,00</div>
<div class="a" style="left:1316px;top:398px;width:1px;height:21px;background:#e3e3e3"></div>
<div class="t" style="left:1316px;width:82px;text-align:right;top:404px;font-size:11px;color:#000">0,00</div>
<div class="a" style="left:1401px;top:398px;width:1px;height:21px;background:#e3e3e3"></div>
<div class="t" style="left:1401px;width:76px;text-align:right;top:404px;font-size:11px;color:#000">0,00</div>
<div class="a" style="left:1480px;top:398px;width:1px;height:21px;background:#e3e3e3"></div>
<div class="t" style="left:1480px;width:76px;text-align:right;top:404px;font-size:11px;color:#000">0,00</div>
<div class="a" style="left:1559px;top:398px;width:1px;height:21px;background:#e3e3e3"></div>
<div class="t" style="left:1559px;width:80px;text-align:right;top:404px;font-size:11px;color:#000">0,00</div>
<div class="a" style="left:1642px;top:398px;width:1px;height:21px;background:#e3e3e3"></div>
<div class="t" style="left:1642px;width:79px;text-align:right;top:404px;font-size:11px;color:#000">0,00</div>
<div class="a" style="left:1724px;top:398px;width:1px;height:21px;background:#e3e3e3"></div>
<div class="t" style="left:1724px;width:79px;text-align:right;top:404px;font-size:11px;color:#000">0,00</div>
<div class="a" style="left:1806px;top:398px;width:1px;height:21px;background:#e3e3e3"></div>
<div class="t" style="left:1806px;width:79px;text-align:right;top:404px;font-size:11px;color:#000">0,00</div>
<div class="a" style="left:1888px;top:398px;width:1px;height:21px;background:#e3e3e3"></div>
<div class="a" style="left:112px;top:419px;width:36px;height:22px;background:linear-gradient(#fdfdfd,#eceded 40%,#d6d7db);border:1px solid #76777b;box-shadow:inset 1px 1px 0 #fff"></div>
<div class="t" style="left:112px;width:30px;text-align:right;top:425px;font-size:11px;color:#000">3</div>
<div class="a" style="left:147px;top:440px;width:1741px;height:1px;background:#e3e3e3"></div>
<div class="t" style="left:147px;width:58px;text-align:right;top:425px;font-size:11px;color:#000">20182001</div>
<div class="a" style="left:208px;top:419px;width:1px;height:21px;background:#e3e3e3"></div>
<div class="t" style="left:212px;width:50px;overflow:hidden;top:425px;font-size:11px;color:#000">Offen</div>
<div class="a" style="left:263px;top:419px;width:1px;height:21px;background:#e3e3e3"></div>
<div class="t" style="left:267px;width:62px;overflow:hidden;top:425px;font-size:11px;color:#000">08.01.2020</div>
<div class="a" style="left:330px;top:419px;width:1px;height:21px;background:#e3e3e3"></div>
<div class="t" style="left:334px;width:62px;overflow:hidden;top:425px;font-size:11px;color:#000">20</div>
<div class="a" style="left:397px;top:419px;width:1px;height:21px;background:#e3e3e3"></div>
<div class="t" style="left:401px;width:108px;overflow:hidden;top:425px;font-size:11px;color:#000">6 - Schulz  , Martin</div>
<div class="a" style="left:510px;top:419px;width:1px;height:21px;background:#e3e3e3"></div>
<div class="t" style="left:514px;width:47px;overflow:hidden;top:425px;font-size:11px;color:#000">10005</div>
<div class="a" style="left:562px;top:419px;width:1px;height:21px;background:#e3e3e3"></div>
<div class="t" style="left:566px;width:115px;overflow:hidden;top:425px;font-size:11px;color:#000">Familie  Fröhlich</div>
<div class="a" style="left:682px;top:419px;width:1px;height:21px;background:#e3e3e3"></div>
<div class="t" style="left:686px;width:45px;overflow:hidden;top:425px;font-size:11px;color:#000">70806</div>
<div class="a" style="left:732px;top:419px;width:1px;height:21px;background:#e3e3e3"></div>
<div class="t" style="left:736px;width:70px;overflow:hidden;top:425px;font-size:11px;color:#000">Kornwestheim</div>
<div class="a" style="left:807px;top:419px;width:1px;height:21px;background:#e3e3e3"></div>
<div class="a" style="left:858px;top:419px;width:1px;height:21px;background:#e3e3e3"></div>
<div class="a" style="left:978px;top:419px;width:1px;height:21px;background:#e3e3e3"></div>
<div class="a" style="left:1028px;top:419px;width:1px;height:21px;background:#e3e3e3"></div>
<div class="a" style="left:1103px;top:419px;width:1px;height:21px;background:#e3e3e3"></div>
<div class="t" style="left:1103px;width:73px;text-align:right;top:425px;font-size:11px;color:#000">4.829,80</div>
<div class="a" style="left:1179px;top:419px;width:1px;height:21px;background:#e3e3e3"></div>
<div class="t" style="left:1179px;width:74px;text-align:right;top:425px;font-size:11px;color:#000">3.991,95</div>
<div class="a" style="left:1256px;top:419px;width:1px;height:21px;background:#e3e3e3"></div>
<div class="t" style="left:1256px;width:57px;text-align:right;top:425px;font-size:11px;color:#000">837,85</div>
<div class="a" style="left:1316px;top:419px;width:1px;height:21px;background:#e3e3e3"></div>
<div class="t" style="left:1316px;width:82px;text-align:right;top:425px;font-size:11px;color:#000">99,77</div>
<div class="a" style="left:1401px;top:419px;width:1px;height:21px;background:#e3e3e3"></div>
<div class="t" style="left:1401px;width:76px;text-align:right;top:425px;font-size:11px;color:#000">71.753,03</div>
<div class="a" style="left:1480px;top:419px;width:1px;height:21px;background:#e3e3e3"></div>
<div class="t" style="left:1480px;width:76px;text-align:right;top:425px;font-size:11px;color:#000">162.339,04</div>
<div class="a" style="left:1560px;top:420px;width:82px;height:20px;background:#f7c6c6"></div>
<div class="a" style="left:1559px;top:419px;width:1px;height:21px;background:#e3e3e3"></div>
<div class="t" style="left:1559px;width:80px;text-align:right;top:425px;font-size:11px;color:#e0001a">-90.586,01</div>
<div class="a" style="left:1642px;top:419px;width:1px;height:21px;background:#e3e3e3"></div>
<div class="t" style="left:1642px;width:79px;text-align:right;top:425px;font-size:11px;color:#000">209.600,93</div>
<div class="a" style="left:1724px;top:419px;width:1px;height:21px;background:#e3e3e3"></div>
<div class="t" style="left:1724px;width:79px;text-align:right;top:425px;font-size:11px;color:#000">18.795,50</div>
<div class="a" style="left:1806px;top:419px;width:1px;height:21px;background:#e3e3e3"></div>
<div class="t" style="left:1806px;width:79px;text-align:right;top:425px;font-size:11px;color:#000">190.805,43</div>
<div class="a" style="left:1888px;top:419px;width:1px;height:21px;background:#e3e3e3"></div>
<div class="a" style="left:112px;top:440px;width:36px;height:22px;background:linear-gradient(#fdfdfd,#eceded 40%,#d6d7db);border:1px solid #76777b;box-shadow:inset 1px 1px 0 #fff"></div>
<div class="t" style="left:112px;width:30px;text-align:right;top:446px;font-size:11px;color:#000">4</div>
<div class="a" style="left:147px;top:461px;width:1741px;height:1px;background:#e3e3e3"></div>
<div class="t" style="left:147px;width:58px;text-align:right;top:446px;font-size:11px;color:#000">21900044</div>
<div class="a" style="left:209px;top:441px;width:54px;height:20px;background:#c6e1a6"></div>
<div class="a" style="left:208px;top:440px;width:1px;height:21px;background:#e3e3e3"></div>
<div class="t" style="left:212px;width:50px;overflow:hidden;top:446px;font-size:11px;color:#000">Erledigt</div>
<div class="a" style="left:263px;top:440px;width:1px;height:21px;background:#e3e3e3"></div>
<div class="t" style="left:267px;width:62px;overflow:hidden;top:446px;font-size:11px;color:#000">10.12.2019</div>
<div class="a" style="left:330px;top:440px;width:1px;height:21px;background:#e3e3e3"></div>
<div class="t" style="left:334px;width:62px;overflow:hidden;top:446px;font-size:11px;color:#000">30</div>
<div class="a" style="left:397px;top:440px;width:1px;height:21px;background:#e3e3e3"></div>
<div class="a" style="left:510px;top:440px;width:1px;height:21px;background:#e3e3e3"></div>
<div class="t" style="left:514px;width:47px;overflow:hidden;top:446px;font-size:11px;color:#000">10104</div>
<div class="a" style="left:562px;top:440px;width:1px;height:21px;background:#e3e3e3"></div>
<div class="t" style="left:566px;width:115px;overflow:hidden;top:446px;font-size:11px;color:#000">Herr Emil Rathenau</div>
<div class="a" style="left:682px;top:440px;width:1px;height:21px;background:#e3e3e3"></div>
<div class="t" style="left:686px;width:45px;overflow:hidden;top:446px;font-size:11px;color:#000">70736</div>
<div class="a" style="left:732px;top:440px;width:1px;height:21px;background:#e3e3e3"></div>
<div class="t" style="left:736px;width:70px;overflow:hidden;top:446px;font-size:11px;color:#000">Fellbach</div>
<div class="a" style="left:807px;top:440px;width:1px;height:21px;background:#e3e3e3"></div>
<div class="a" style="left:858px;top:440px;width:1px;height:21px;background:#e3e3e3"></div>
<div class="a" style="left:978px;top:440px;width:1px;height:21px;background:#e3e3e3"></div>
<div class="a" style="left:1028px;top:440px;width:1px;height:21px;background:#e3e3e3"></div>
<div class="a" style="left:1103px;top:440px;width:1px;height:21px;background:#e3e3e3"></div>
<div class="t" style="left:1103px;width:73px;text-align:right;top:446px;font-size:11px;color:#000">0,00</div>
<div class="a" style="left:1179px;top:440px;width:1px;height:21px;background:#e3e3e3"></div>
<div class="t" style="left:1179px;width:74px;text-align:right;top:446px;font-size:11px;color:#000">0,00</div>
<div class="a" style="left:1256px;top:440px;width:1px;height:21px;background:#e3e3e3"></div>
<div class="t" style="left:1256px;width:57px;text-align:right;top:446px;font-size:11px;color:#000">0,00</div>
<div class="a" style="left:1316px;top:440px;width:1px;height:21px;background:#e3e3e3"></div>
<div class="t" style="left:1316px;width:82px;text-align:right;top:446px;font-size:11px;color:#000">0,00</div>
<div class="a" style="left:1401px;top:440px;width:1px;height:21px;background:#e3e3e3"></div>
<div class="t" style="left:1401px;width:76px;text-align:right;top:446px;font-size:11px;color:#000">0,00</div>
<div class="a" style="left:1480px;top:440px;width:1px;height:21px;background:#e3e3e3"></div>
<div class="t" style="left:1480px;width:76px;text-align:right;top:446px;font-size:11px;color:#000">0,00</div>
<div class="a" style="left:1559px;top:440px;width:1px;height:21px;background:#e3e3e3"></div>
<div class="t" style="left:1559px;width:80px;text-align:right;top:446px;font-size:11px;color:#000">0,00</div>
<div class="a" style="left:1642px;top:440px;width:1px;height:21px;background:#e3e3e3"></div>
<div class="t" style="left:1642px;width:79px;text-align:right;top:446px;font-size:11px;color:#000">10.000,00</div>
<div class="a" style="left:1724px;top:440px;width:1px;height:21px;background:#e3e3e3"></div>
<div class="t" style="left:1724px;width:79px;text-align:right;top:446px;font-size:11px;color:#000">0,00</div>
<div class="a" style="left:1806px;top:440px;width:1px;height:21px;background:#e3e3e3"></div>
<div class="t" style="left:1806px;width:79px;text-align:right;top:446px;font-size:11px;color:#000">10.000,00</div>
<div class="a" style="left:1888px;top:440px;width:1px;height:21px;background:#e3e3e3"></div>
<div class="a" style="left:112px;top:461px;width:36px;height:22px;background:linear-gradient(#fdfdfd,#eceded 40%,#d6d7db);border:1px solid #76777b;box-shadow:inset 1px 1px 0 #fff"></div>
<div class="t" style="left:112px;width:30px;text-align:right;top:467px;font-size:11px;color:#000">5</div>
<div class="a" style="left:147px;top:482px;width:1741px;height:1px;background:#e3e3e3"></div>
<div class="t" style="left:147px;width:58px;text-align:right;top:467px;font-size:11px;color:#000">21900001</div>
<div class="a" style="left:208px;top:461px;width:1px;height:21px;background:#e3e3e3"></div>
<div class="t" style="left:212px;width:50px;overflow:hidden;top:467px;font-size:11px;color:#000">Offen</div>
<div class="a" style="left:263px;top:461px;width:1px;height:21px;background:#e3e3e3"></div>
<div class="t" style="left:267px;width:62px;overflow:hidden;top:467px;font-size:11px;color:#000">21.08.2019</div>
<div class="a" style="left:330px;top:461px;width:1px;height:21px;background:#e3e3e3"></div>
<div class="t" style="left:334px;width:62px;overflow:hidden;top:467px;font-size:11px;color:#000">20</div>
<div class="a" style="left:397px;top:461px;width:1px;height:21px;background:#e3e3e3"></div>
<div class="a" style="left:510px;top:461px;width:1px;height:21px;background:#e3e3e3"></div>
<div class="t" style="left:514px;width:47px;overflow:hidden;top:467px;font-size:11px;color:#000">10131</div>
<div class="a" style="left:562px;top:461px;width:1px;height:21px;background:#e3e3e3"></div>
<div class="t" style="left:566px;width:115px;overflow:hidden;top:467px;font-size:11px;color:#000">Firma Karl-Thomas  M...</div>
<div class="a" style="left:682px;top:461px;width:1px;height:21px;background:#e3e3e3"></div>
<div class="t" style="left:686px;width:45px;overflow:hidden;top:467px;font-size:11px;color:#000">71034</div>
<div class="a" style="left:732px;top:461px;width:1px;height:21px;background:#e3e3e3"></div>
<div class="t" style="left:736px;width:70px;overflow:hidden;top:467px;font-size:11px;color:#000">Böblingen</div>
<div class="a" style="left:807px;top:461px;width:1px;height:21px;background:#e3e3e3"></div>
<div class="a" style="left:858px;top:461px;width:1px;height:21px;background:#e3e3e3"></div>
<div class="a" style="left:978px;top:461px;width:1px;height:21px;background:#e3e3e3"></div>
<div class="a" style="left:1028px;top:461px;width:1px;height:21px;background:#e3e3e3"></div>
<div class="a" style="left:1103px;top:461px;width:1px;height:21px;background:#e3e3e3"></div>
<div class="t" style="left:1103px;width:73px;text-align:right;top:467px;font-size:11px;color:#000">4,46</div>
<div class="a" style="left:1179px;top:461px;width:1px;height:21px;background:#e3e3e3"></div>
<div class="t" style="left:1179px;width:74px;text-align:right;top:467px;font-size:11px;color:#000">0,00</div>
<div class="a" style="left:1256px;top:461px;width:1px;height:21px;background:#e3e3e3"></div>
<div class="t" style="left:1256px;width:57px;text-align:right;top:467px;font-size:11px;color:#000">4,46</div>
<div class="a" style="left:1316px;top:461px;width:1px;height:21px;background:#e3e3e3"></div>
<div class="t" style="left:1316px;width:82px;text-align:right;top:467px;font-size:11px;color:#000">0,00</div>
<div class="a" style="left:1401px;top:461px;width:1px;height:21px;background:#e3e3e3"></div>
<div class="t" style="left:1401px;width:76px;text-align:right;top:467px;font-size:11px;color:#000">134,38</div>
<div class="a" style="left:1480px;top:461px;width:1px;height:21px;background:#e3e3e3"></div>
<div class="t" style="left:1480px;width:76px;text-align:right;top:467px;font-size:11px;color:#000">0,00</div>
<div class="a" style="left:1559px;top:461px;width:1px;height:21px;background:#e3e3e3"></div>
<div class="t" style="left:1559px;width:80px;text-align:right;top:467px;font-size:11px;color:#000">134,38</div>
<div class="a" style="left:1642px;top:461px;width:1px;height:21px;background:#e3e3e3"></div>
<div class="t" style="left:1642px;width:79px;text-align:right;top:467px;font-size:11px;color:#000">110,29</div>
<div class="a" style="left:1724px;top:461px;width:1px;height:21px;background:#e3e3e3"></div>
<div class="t" style="left:1724px;width:79px;text-align:right;top:467px;font-size:11px;color:#000">1.246,00</div>
<div class="a" style="left:1807px;top:462px;width:81px;height:20px;background:#f7c6c6"></div>
<div class="a" style="left:1806px;top:461px;width:1px;height:21px;background:#e3e3e3"></div>
<div class="t" style="left:1806px;width:79px;text-align:right;top:467px;font-size:11px;color:#e0001a">-1.135,71</div>
<div class="a" style="left:1888px;top:461px;width:1px;height:21px;background:#e3e3e3"></div>
<div class="a" style="left:112px;top:482px;width:36px;height:22px;background:linear-gradient(#fdfdfd,#eceded 40%,#d6d7db);border:1px solid #76777b;box-shadow:inset 1px 1px 0 #fff"></div>
<div class="t" style="left:112px;width:30px;text-align:right;top:488px;font-size:11px;color:#000">6</div>
<div class="a" style="left:147px;top:503px;width:1741px;height:1px;background:#e3e3e3"></div>
<div class="t" style="left:147px;width:58px;text-align:right;top:488px;font-size:11px;color:#000">21600002</div>
<div class="a" style="left:208px;top:482px;width:1px;height:21px;background:#e3e3e3"></div>
<div class="t" style="left:212px;width:50px;overflow:hidden;top:488px;font-size:11px;color:#000">Offen</div>
<div class="a" style="left:263px;top:482px;width:1px;height:21px;background:#e3e3e3"></div>
<div class="t" style="left:267px;width:62px;overflow:hidden;top:488px;font-size:11px;color:#000">03.06.2019</div>
<div class="a" style="left:330px;top:482px;width:1px;height:21px;background:#e3e3e3"></div>
<div class="t" style="left:334px;width:62px;overflow:hidden;top:488px;font-size:11px;color:#000">Wüstenrot</div>
<div class="a" style="left:397px;top:482px;width:1px;height:21px;background:#e3e3e3"></div>
<div class="t" style="left:401px;width:108px;overflow:hidden;top:488px;font-size:11px;color:#000">9 - Meyer, Torsten</div>
<div class="a" style="left:510px;top:482px;width:1px;height:21px;background:#e3e3e3"></div>
<div class="t" style="left:514px;width:47px;overflow:hidden;top:488px;font-size:11px;color:#000">10002</div>
<div class="a" style="left:562px;top:482px;width:1px;height:21px;background:#e3e3e3"></div>
<div class="t" style="left:566px;width:115px;overflow:hidden;top:488px;font-size:11px;color:#000">  Wüstenrot Haus- un...</div>
<div class="a" style="left:682px;top:482px;width:1px;height:21px;background:#e3e3e3"></div>
<div class="t" style="left:686px;width:45px;overflow:hidden;top:488px;font-size:11px;color:#000">71638</div>
<div class="a" style="left:732px;top:482px;width:1px;height:21px;background:#e3e3e3"></div>
<div class="t" style="left:736px;width:70px;overflow:hidden;top:488px;font-size:11px;color:#000">Ludwigsburg</div>
<div class="a" style="left:807px;top:482px;width:1px;height:21px;background:#e3e3e3"></div>
<div class="t" style="left:811px;width:46px;overflow:hidden;top:488px;font-size:11px;color:#000">0</div>
<div class="a" style="left:858px;top:482px;width:1px;height:21px;background:#e3e3e3"></div>
<div class="t" style="left:862px;width:115px;overflow:hidden;top:488px;font-size:11px;color:#000">  Elfriede-Breitenbac...</div>
<div class="a" style="left:978px;top:482px;width:1px;height:21px;background:#e3e3e3"></div>
<div class="t" style="left:982px;width:45px;overflow:hidden;top:488px;font-size:11px;color:#000">71640</div>
<div class="a" style="left:1028px;top:482px;width:1px;height:21px;background:#e3e3e3"></div>
<div class="t" style="left:1032px;width:70px;overflow:hidden;top:488px;font-size:11px;color:#000">Ludwigsburg</div>
<div class="a" style="left:1103px;top:482px;width:1px;height:21px;background:#e3e3e3"></div>
<div class="t" style="left:1103px;width:73px;text-align:right;top:488px;font-size:11px;color:#000">204,08</div>
<div class="a" style="left:1179px;top:482px;width:1px;height:21px;background:#e3e3e3"></div>
<div class="t" style="left:1179px;width:74px;text-align:right;top:488px;font-size:11px;color:#000">0,00</div>
<div class="a" style="left:1256px;top:482px;width:1px;height:21px;background:#e3e3e3"></div>
<div class="t" style="left:1256px;width:57px;text-align:right;top:488px;font-size:11px;color:#000">204,08</div>
<div class="a" style="left:1316px;top:482px;width:1px;height:21px;background:#e3e3e3"></div>
<div class="t" style="left:1316px;width:82px;text-align:right;top:488px;font-size:11px;color:#000">0,00</div>
<div class="a" style="left:1401px;top:482px;width:1px;height:21px;background:#e3e3e3"></div>
<div class="t" style="left:1401px;width:76px;text-align:right;top:488px;font-size:11px;color:#000">5.328,78</div>
<div class="a" style="left:1480px;top:482px;width:1px;height:21px;background:#e3e3e3"></div>
<div class="t" style="left:1480px;width:76px;text-align:right;top:488px;font-size:11px;color:#000">0,00</div>
<div class="a" style="left:1559px;top:482px;width:1px;height:21px;background:#e3e3e3"></div>
<div class="t" style="left:1559px;width:80px;text-align:right;top:488px;font-size:11px;color:#000">5.328,78</div>
<div class="a" style="left:1642px;top:482px;width:1px;height:21px;background:#e3e3e3"></div>
<div class="t" style="left:1642px;width:79px;text-align:right;top:488px;font-size:11px;color:#000">24.881,61</div>
<div class="a" style="left:1724px;top:482px;width:1px;height:21px;background:#e3e3e3"></div>
<div class="t" style="left:1724px;width:79px;text-align:right;top:488px;font-size:11px;color:#000">24.881,26</div>
<div class="a" style="left:1806px;top:482px;width:1px;height:21px;background:#e3e3e3"></div>
<div class="t" style="left:1806px;width:79px;text-align:right;top:488px;font-size:11px;color:#000">0,35</div>
<div class="a" style="left:1888px;top:482px;width:1px;height:21px;background:#e3e3e3"></div>
<div class="a" style="left:112px;top:503px;width:36px;height:22px;background:linear-gradient(#fdfdfd,#eceded 40%,#d6d7db);border:1px solid #76777b;box-shadow:inset 1px 1px 0 #fff"></div>
<div class="t" style="left:112px;width:30px;text-align:right;top:509px;font-size:11px;color:#000">7</div>
<div class="a" style="left:147px;top:524px;width:1741px;height:1px;background:#e3e3e3"></div>
<div class="t" style="left:147px;width:58px;text-align:right;top:509px;font-size:11px;color:#000">66000003</div>
<div class="a" style="left:209px;top:504px;width:54px;height:20px;background:#c6e1a6"></div>
<div class="a" style="left:208px;top:503px;width:1px;height:21px;background:#e3e3e3"></div>
<div class="t" style="left:212px;width:50px;overflow:hidden;top:509px;font-size:11px;color:#000">Erledigt</div>
<div class="a" style="left:263px;top:503px;width:1px;height:21px;background:#e3e3e3"></div>
<div class="t" style="left:267px;width:62px;overflow:hidden;top:509px;font-size:11px;color:#000">24.05.2019</div>
<div class="a" style="left:330px;top:503px;width:1px;height:21px;background:#e3e3e3"></div>
<div class="t" style="left:334px;width:62px;overflow:hidden;top:509px;font-size:11px;color:#000">Erfa</div>
<div class="a" style="left:397px;top:503px;width:1px;height:21px;background:#e3e3e3"></div>
<div class="a" style="left:510px;top:503px;width:1px;height:21px;background:#e3e3e3"></div>
<div class="t" style="left:514px;width:47px;overflow:hidden;top:509px;font-size:11px;color:#000">10116</div>
<div class="a" style="left:562px;top:503px;width:1px;height:21px;background:#e3e3e3"></div>
<div class="t" style="left:566px;width:115px;overflow:hidden;top:509px;font-size:11px;color:#000">Herrn Wolfgang Müller</div>
<div class="a" style="left:682px;top:503px;width:1px;height:21px;background:#e3e3e3"></div>
<div class="t" style="left:686px;width:45px;overflow:hidden;top:509px;font-size:11px;color:#000">71034</div>
<div class="a" style="left:732px;top:503px;width:1px;height:21px;background:#e3e3e3"></div>
<div class="t" style="left:736px;width:70px;overflow:hidden;top:509px;font-size:11px;color:#000">Böblingen</div>
<div class="a" style="left:807px;top:503px;width:1px;height:21px;background:#e3e3e3"></div>
<div class="a" style="left:858px;top:503px;width:1px;height:21px;background:#e3e3e3"></div>
<div class="a" style="left:978px;top:503px;width:1px;height:21px;background:#e3e3e3"></div>
<div class="a" style="left:1028px;top:503px;width:1px;height:21px;background:#e3e3e3"></div>
<div class="a" style="left:1103px;top:503px;width:1px;height:21px;background:#e3e3e3"></div>
<div class="t" style="left:1103px;width:73px;text-align:right;top:509px;font-size:11px;color:#000">205,69</div>
<div class="a" style="left:1179px;top:503px;width:1px;height:21px;background:#e3e3e3"></div>
<div class="t" style="left:1179px;width:74px;text-align:right;top:509px;font-size:11px;color:#000">261,25</div>
<div class="a" style="left:1257px;top:504px;width:59px;height:20px;background:#f7c6c6"></div>
<div class="a" style="left:1256px;top:503px;width:1px;height:21px;background:#e3e3e3"></div>
<div class="t" style="left:1256px;width:57px;text-align:right;top:509px;font-size:11px;color:#e0001a">-55,56</div>
<div class="a" style="left:1316px;top:503px;width:1px;height:21px;background:#e3e3e3"></div>
<div class="t" style="left:1316px;width:82px;text-align:right;top:509px;font-size:11px;color:#000">100,00</div>
<div class="a" style="left:1401px;top:503px;width:1px;height:21px;background:#e3e3e3"></div>
<div class="t" style="left:1401px;width:76px;text-align:right;top:509px;font-size:11px;color:#000">5.218,98</div>
<div class="a" style="left:1480px;top:503px;width:1px;height:21px;background:#e3e3e3"></div>
<div class="t" style="left:1480px;width:76px;text-align:right;top:509px;font-size:11px;color:#000">4.669,10</div>
<div class="a" style="left:1559px;top:503px;width:1px;height:21px;background:#e3e3e3"></div>
<div class="t" style="left:1559px;width:80px;text-align:right;top:509px;font-size:11px;color:#000">549,88</div>
<div class="a" style="left:1642px;top:503px;width:1px;height:21px;background:#e3e3e3"></div>
<div class="t" style="left:1642px;width:79px;text-align:right;top:509px;font-size:11px;color:#000">9.388,30</div>
<div class="a" style="left:1724px;top:503px;width:1px;height:21px;background:#e3e3e3"></div>
<div class="t" style="left:1724px;width:79px;text-align:right;top:509px;font-size:11px;color:#000">6.045,17</div>
<div class="a" style="left:1806px;top:503px;width:1px;height:21px;background:#e3e3e3"></div>
<div class="t" style="left:1806px;width:79px;text-align:right;top:509px;font-size:11px;color:#000">3.343,13</div>
<div class="a" style="left:1888px;top:503px;width:1px;height:21px;background:#e3e3e3"></div>
<div class="a" style="left:112px;top:524px;width:36px;height:22px;background:linear-gradient(#fdfdfd,#eceded 40%,#d6d7db);border:1px solid #76777b;box-shadow:inset 1px 1px 0 #fff"></div>
<div class="t" style="left:112px;width:30px;text-align:right;top:530px;font-size:11px;color:#000">8</div>
<div class="a" style="left:147px;top:545px;width:1741px;height:1px;background:#e3e3e3"></div>
<div class="t" style="left:147px;width:58px;text-align:right;top:530px;font-size:11px;color:#000">2021231</div>
<div class="a" style="left:208px;top:524px;width:1px;height:21px;background:#e3e3e3"></div>
<div class="t" style="left:212px;width:50px;overflow:hidden;top:530px;font-size:11px;color:#000">Offen</div>
<div class="a" style="left:263px;top:524px;width:1px;height:21px;background:#e3e3e3"></div>
<div class="t" style="left:267px;width:62px;overflow:hidden;top:530px;font-size:11px;color:#000">14.05.2019</div>
<div class="a" style="left:330px;top:524px;width:1px;height:21px;background:#e3e3e3"></div>
<div class="t" style="left:334px;width:62px;overflow:hidden;top:530px;font-size:11px;color:#000">20</div>
<div class="a" style="left:397px;top:524px;width:1px;height:21px;background:#e3e3e3"></div>
<div class="a" style="left:510px;top:524px;width:1px;height:21px;background:#e3e3e3"></div>
<div class="t" style="left:514px;width:47px;overflow:hidden;top:530px;font-size:11px;color:#000">16114</div>
<div class="a" style="left:562px;top:524px;width:1px;height:21px;background:#e3e3e3"></div>
<div class="t" style="left:566px;width:115px;overflow:hidden;top:530px;font-size:11px;color:#000"> WEG Ebertstr. 37-39...</div>
<div class="a" style="left:682px;top:524px;width:1px;height:21px;background:#e3e3e3"></div>
<div class="t" style="left:686px;width:45px;overflow:hidden;top:530px;font-size:11px;color:#000">76133</div>
<div class="a" style="left:732px;top:524px;width:1px;height:21px;background:#e3e3e3"></div>
<div class="t" style="left:736px;width:70px;overflow:hidden;top:530px;font-size:11px;color:#000">Karlsruhe</div>
<div class="a" style="left:807px;top:524px;width:1px;height:21px;background:#e3e3e3"></div>
<div class="t" style="left:811px;width:46px;overflow:hidden;top:530px;font-size:11px;color:#000">0</div>
<div class="a" style="left:858px;top:524px;width:1px;height:21px;background:#e3e3e3"></div>
<div class="a" style="left:978px;top:524px;width:1px;height:21px;background:#e3e3e3"></div>
<div class="a" style="left:1028px;top:524px;width:1px;height:21px;background:#e3e3e3"></div>
<div class="t" style="left:1032px;width:70px;overflow:hidden;top:530px;font-size:11px;color:#000">Karlsruhe</div>
<div class="a" style="left:1103px;top:524px;width:1px;height:21px;background:#e3e3e3"></div>
<div class="t" style="left:1103px;width:73px;text-align:right;top:530px;font-size:11px;color:#000">549,50</div>
<div class="a" style="left:1179px;top:524px;width:1px;height:21px;background:#e3e3e3"></div>
<div class="t" style="left:1179px;width:74px;text-align:right;top:530px;font-size:11px;color:#000">402,25</div>
<div class="a" style="left:1256px;top:524px;width:1px;height:21px;background:#e3e3e3"></div>
<div class="t" style="left:1256px;width:57px;text-align:right;top:530px;font-size:11px;color:#000">147,25</div>
<div class="a" style="left:1316px;top:524px;width:1px;height:21px;background:#e3e3e3"></div>
<div class="t" style="left:1316px;width:82px;text-align:right;top:530px;font-size:11px;color:#000">100,00</div>
<div class="a" style="left:1401px;top:524px;width:1px;height:21px;background:#e3e3e3"></div>
<div class="t" style="left:1401px;width:76px;text-align:right;top:530px;font-size:11px;color:#000">19.661,11</div>
<div class="a" style="left:1480px;top:524px;width:1px;height:21px;background:#e3e3e3"></div>
<div class="t" style="left:1480px;width:76px;text-align:right;top:530px;font-size:11px;color:#000">0,00</div>
<div class="a" style="left:1559px;top:524px;width:1px;height:21px;background:#e3e3e3"></div>
<div class="t" style="left:1559px;width:80px;text-align:right;top:530px;font-size:11px;color:#000">19.661,11</div>
<div class="a" style="left:1642px;top:524px;width:1px;height:21px;background:#e3e3e3"></div>
<div class="t" style="left:1642px;width:79px;text-align:right;top:530px;font-size:11px;color:#000">28.956,88</div>
<div class="a" style="left:1724px;top:524px;width:1px;height:21px;background:#e3e3e3"></div>
<div class="t" style="left:1724px;width:79px;text-align:right;top:530px;font-size:11px;color:#000">9.101,68</div>
<div class="a" style="left:1806px;top:524px;width:1px;height:21px;background:#e3e3e3"></div>
<div class="t" style="left:1806px;width:79px;text-align:right;top:530px;font-size:11px;color:#000">19.855,20</div>
<div class="a" style="left:1888px;top:524px;width:1px;height:21px;background:#e3e3e3"></div>
<div class="a" style="left:112px;top:545px;width:36px;height:22px;background:linear-gradient(#fdfdfd,#eceded 40%,#d6d7db);border:1px solid #76777b;box-shadow:inset 1px 1px 0 #fff"></div>
<div class="t" style="left:112px;width:30px;text-align:right;top:551px;font-size:11px;color:#000">9</div>
<div class="a" style="left:147px;top:566px;width:1741px;height:1px;background:#e3e3e3"></div>
<div class="t" style="left:147px;width:58px;text-align:right;top:551px;font-size:11px;color:#000">66000030</div>
<div class="a" style="left:208px;top:545px;width:1px;height:21px;background:#e3e3e3"></div>
<div class="t" style="left:212px;width:50px;overflow:hidden;top:551px;font-size:11px;color:#000">Offen</div>
<div class="a" style="left:263px;top:545px;width:1px;height:21px;background:#e3e3e3"></div>
<div class="t" style="left:267px;width:62px;overflow:hidden;top:551px;font-size:11px;color:#000">06.05.2019</div>
<div class="a" style="left:330px;top:545px;width:1px;height:21px;background:#e3e3e3"></div>
<div class="t" style="left:334px;width:62px;overflow:hidden;top:551px;font-size:11px;color:#000">Erfa</div>
<div class="a" style="left:397px;top:545px;width:1px;height:21px;background:#e3e3e3"></div>
<div class="a" style="left:510px;top:545px;width:1px;height:21px;background:#e3e3e3"></div>
<div class="t" style="left:514px;width:47px;overflow:hidden;top:551px;font-size:11px;color:#000">10103</div>
<div class="a" style="left:562px;top:545px;width:1px;height:21px;background:#e3e3e3"></div>
<div class="t" style="left:566px;width:115px;overflow:hidden;top:551px;font-size:11px;color:#000">Herrn Peter Reiser</div>
<div class="a" style="left:682px;top:545px;width:1px;height:21px;background:#e3e3e3"></div>
<div class="t" style="left:686px;width:45px;overflow:hidden;top:551px;font-size:11px;color:#000">70734</div>
<div class="a" style="left:732px;top:545px;width:1px;height:21px;background:#e3e3e3"></div>
<div class="t" style="left:736px;width:70px;overflow:hidden;top:551px;font-size:11px;color:#000">Fellbach</div>
<div class="a" style="left:807px;top:545px;width:1px;height:21px;background:#e3e3e3"></div>
<div class="t" style="left:811px;width:46px;overflow:hidden;top:551px;font-size:11px;color:#000">10103</div>
<div class="a" style="left:858px;top:545px;width:1px;height:21px;background:#e3e3e3"></div>
<div class="t" style="left:862px;width:115px;overflow:hidden;top:551px;font-size:11px;color:#000">Herrn Peter Reiser</div>
<div class="a" style="left:978px;top:545px;width:1px;height:21px;background:#e3e3e3"></div>
<div class="t" style="left:982px;width:45px;overflow:hidden;top:551px;font-size:11px;color:#000">70734</div>
<div class="a" style="left:1028px;top:545px;width:1px;height:21px;background:#e3e3e3"></div>
<div class="t" style="left:1032px;width:70px;overflow:hidden;top:551px;font-size:11px;color:#000">Fellbach</div>
<div class="a" style="left:1103px;top:545px;width:1px;height:21px;background:#e3e3e3"></div>
<div class="t" style="left:1103px;width:73px;text-align:right;top:551px;font-size:11px;color:#000">231,26</div>
<div class="a" style="left:1179px;top:545px;width:1px;height:21px;background:#e3e3e3"></div>
<div class="t" style="left:1179px;width:74px;text-align:right;top:551px;font-size:11px;color:#000">0,00</div>
<div class="a" style="left:1256px;top:545px;width:1px;height:21px;background:#e3e3e3"></div>
<div class="t" style="left:1256px;width:57px;text-align:right;top:551px;font-size:11px;color:#000">231,26</div>
<div class="a" style="left:1316px;top:545px;width:1px;height:21px;background:#e3e3e3"></div>
<div class="t" style="left:1316px;width:82px;text-align:right;top:551px;font-size:11px;color:#000">0,00</div>
<div class="a" style="left:1401px;top:545px;width:1px;height:21px;background:#e3e3e3"></div>
<div class="t" style="left:1401px;width:76px;text-align:right;top:551px;font-size:11px;color:#000">5.867,98</div>
<div class="a" style="left:1480px;top:545px;width:1px;height:21px;background:#e3e3e3"></div>
<div class="t" style="left:1480px;width:76px;text-align:right;top:551px;font-size:11px;color:#000">0,00</div>
<div class="a" style="left:1559px;top:545px;width:1px;height:21px;background:#e3e3e3"></div>
<div class="t" style="left:1559px;width:80px;text-align:right;top:551px;font-size:11px;color:#000">5.867,98</div>
<div class="a" style="left:1642px;top:545px;width:1px;height:21px;background:#e3e3e3"></div>
<div class="t" style="left:1642px;width:79px;text-align:right;top:551px;font-size:11px;color:#000">6.021,10</div>
<div class="a" style="left:1724px;top:545px;width:1px;height:21px;background:#e3e3e3"></div>
<div class="t" style="left:1724px;width:79px;text-align:right;top:551px;font-size:11px;color:#000">0,00</div>
<div class="a" style="left:1806px;top:545px;width:1px;height:21px;background:#e3e3e3"></div>
<div class="t" style="left:1806px;width:79px;text-align:right;top:551px;font-size:11px;color:#000">6.021,10</div>
<div class="a" style="left:1888px;top:545px;width:1px;height:21px;background:#e3e3e3"></div>
<div class="a" style="left:112px;top:566px;width:36px;height:22px;background:linear-gradient(#fdfdfd,#eceded 40%,#d6d7db);border:1px solid #76777b;box-shadow:inset 1px 1px 0 #fff"></div>
<div class="t" style="left:112px;width:30px;text-align:right;top:572px;font-size:11px;color:#000">10</div>
<div class="a" style="left:147px;top:587px;width:1741px;height:1px;background:#e3e3e3"></div>
<div class="t" style="left:147px;width:58px;text-align:right;top:572px;font-size:11px;color:#000">99200016</div>
<div class="a" style="left:209px;top:567px;width:54px;height:20px;background:#c6e1a6"></div>
<div class="a" style="left:208px;top:566px;width:1px;height:21px;background:#e3e3e3"></div>
<div class="t" style="left:212px;width:50px;overflow:hidden;top:572px;font-size:11px;color:#000">Erledigt</div>
<div class="a" style="left:263px;top:566px;width:1px;height:21px;background:#e3e3e3"></div>
<div class="t" style="left:267px;width:62px;overflow:hidden;top:572px;font-size:11px;color:#000">13.08.2018</div>
<div class="a" style="left:330px;top:566px;width:1px;height:21px;background:#e3e3e3"></div>
<div class="t" style="left:334px;width:62px;overflow:hidden;top:572px;font-size:11px;color:#000">eltefa</div>
<div class="a" style="left:397px;top:566px;width:1px;height:21px;background:#e3e3e3"></div>
<div class="a" style="left:510px;top:566px;width:1px;height:21px;background:#e3e3e3"></div>
<div class="t" style="left:514px;width:47px;overflow:hidden;top:572px;font-size:11px;color:#000">10123</div>
<div class="a" style="left:562px;top:566px;width:1px;height:21px;background:#e3e3e3"></div>
<div class="t" style="left:566px;width:115px;overflow:hidden;top:572px;font-size:11px;color:#000">Firma  Kurt Müller & C...</div>
<div class="a" style="left:682px;top:566px;width:1px;height:21px;background:#e3e3e3"></div>
<div class="t" style="left:686px;width:45px;overflow:hidden;top:572px;font-size:11px;color:#000">70736</div>
<div class="a" style="left:732px;top:566px;width:1px;height:21px;background:#e3e3e3"></div>
<div class="t" style="left:736px;width:70px;overflow:hidden;top:572px;font-size:11px;color:#000">Fellbach</div>
<div class="a" style="left:807px;top:566px;width:1px;height:21px;background:#e3e3e3"></div>
<div class="t" style="left:811px;width:46px;overflow:hidden;top:572px;font-size:11px;color:#000">10124</div>
<div class="a" style="left:858px;top:566px;width:1px;height:21px;background:#e3e3e3"></div>
<div class="t" style="left:862px;width:115px;overflow:hidden;top:572px;font-size:11px;color:#000">Herrn Peter Schmidt</div>
<div class="a" style="left:978px;top:566px;width:1px;height:21px;background:#e3e3e3"></div>
<div class="t" style="left:982px;width:45px;overflow:hidden;top:572px;font-size:11px;color:#000">70437</div>
<div class="a" style="left:1028px;top:566px;width:1px;height:21px;background:#e3e3e3"></div>
<div class="t" style="left:1032px;width:70px;overflow:hidden;top:572px;font-size:11px;color:#000">Stuttgart</div>
<div class="a" style="left:1103px;top:566px;width:1px;height:21px;background:#e3e3e3"></div>
<div class="t" style="left:1103px;width:73px;text-align:right;top:572px;font-size:11px;color:#000">217,65</div>
<div class="a" style="left:1179px;top:566px;width:1px;height:21px;background:#e3e3e3"></div>
<div class="t" style="left:1179px;width:74px;text-align:right;top:572px;font-size:11px;color:#000">144,00</div>
<div class="a" style="left:1256px;top:566px;width:1px;height:21px;background:#e3e3e3"></div>
<div class="t" style="left:1256px;width:57px;text-align:right;top:572px;font-size:11px;color:#000">73,65</div>
<div class="a" style="left:1316px;top:566px;width:1px;height:21px;background:#e3e3e3"></div>
<div class="t" style="left:1316px;width:82px;text-align:right;top:572px;font-size:11px;color:#000">100,00</div>
<div class="a" style="left:1401px;top:566px;width:1px;height:21px;background:#e3e3e3"></div>
<div class="t" style="left:1401px;width:76px;text-align:right;top:572px;font-size:11px;color:#000">6.960,03</div>
<div class="a" style="left:1480px;top:566px;width:1px;height:21px;background:#e3e3e3"></div>
<div class="t" style="left:1480px;width:76px;text-align:right;top:572px;font-size:11px;color:#000">3.507,84</div>
<div class="a" style="left:1559px;top:566px;width:1px;height:21px;background:#e3e3e3"></div>
<div class="t" style="left:1559px;width:80px;text-align:right;top:572px;font-size:11px;color:#000">3.452,19</div>
<div class="a" style="left:1642px;top:566px;width:1px;height:21px;background:#e3e3e3"></div>
<div class="t" style="left:1642px;width:79px;text-align:right;top:572px;font-size:11px;color:#000">6.165,98</div>
<div class="a" style="left:1724px;top:566px;width:1px;height:21px;background:#e3e3e3"></div>
<div class="t" style="left:1724px;width:79px;text-align:right;top:572px;font-size:11px;color:#000">3.929,82</div>
<div class="a" style="left:1806px;top:566px;width:1px;height:21px;background:#e3e3e3"></div>
<div class="t" style="left:1806px;width:79px;text-align:right;top:572px;font-size:11px;color:#000">2.236,16</div>
<div class="a" style="left:1888px;top:566px;width:1px;height:21px;background:#e3e3e3"></div>
<div class="a" style="left:112px;top:587px;width:36px;height:22px;background:linear-gradient(#fdfdfd,#eceded 40%,#d6d7db);border:1px solid #76777b;box-shadow:inset 1px 1px 0 #fff"></div>
<div class="t" style="left:112px;width:30px;text-align:right;top:593px;font-size:11px;color:#000">11</div>
<div class="a" style="left:147px;top:608px;width:1741px;height:1px;background:#e3e3e3"></div>
<div class="t" style="left:147px;width:58px;text-align:right;top:593px;font-size:11px;color:#000">61000071</div>
<div class="a" style="left:209px;top:588px;width:54px;height:20px;background:#c6e1a6"></div>
<div class="a" style="left:208px;top:587px;width:1px;height:21px;background:#e3e3e3"></div>
<div class="t" style="left:212px;width:50px;overflow:hidden;top:593px;font-size:11px;color:#000">Erledigt</div>
<div class="a" style="left:263px;top:587px;width:1px;height:21px;background:#e3e3e3"></div>
<div class="t" style="left:267px;width:62px;overflow:hidden;top:593px;font-size:11px;color:#000">06.08.2018</div>
<div class="a" style="left:330px;top:587px;width:1px;height:21px;background:#e3e3e3"></div>
<div class="t" style="left:334px;width:62px;overflow:hidden;top:593px;font-size:11px;color:#000">Heizung</div>
<div class="a" style="left:397px;top:587px;width:1px;height:21px;background:#e3e3e3"></div>
<div class="t" style="left:401px;width:108px;overflow:hidden;top:593px;font-size:11px;color:#000">8 - Müller, Winfried</div>
<div class="a" style="left:510px;top:587px;width:1px;height:21px;background:#e3e3e3"></div>
<div class="t" style="left:514px;width:47px;overflow:hidden;top:593px;font-size:11px;color:#000">10573</div>
<div class="a" style="left:562px;top:587px;width:1px;height:21px;background:#e3e3e3"></div>
<div class="t" style="left:566px;width:115px;overflow:hidden;top:593px;font-size:11px;color:#000">An die  Stadt Markgr...</div>
<div class="a" style="left:682px;top:587px;width:1px;height:21px;background:#e3e3e3"></div>
<div class="t" style="left:686px;width:45px;overflow:hidden;top:593px;font-size:11px;color:#000">71706</div>
<div class="a" style="left:732px;top:587px;width:1px;height:21px;background:#e3e3e3"></div>
<div class="t" style="left:736px;width:70px;overflow:hidden;top:593px;font-size:11px;color:#000">Markgrönin...</div>
<div class="a" style="left:807px;top:587px;width:1px;height:21px;background:#e3e3e3"></div>
<div class="t" style="left:811px;width:46px;overflow:hidden;top:593px;font-size:11px;color:#000">10573</div>
<div class="a" style="left:858px;top:587px;width:1px;height:21px;background:#e3e3e3"></div>
<div class="t" style="left:862px;width:115px;overflow:hidden;top:593px;font-size:11px;color:#000">  Grundschule Markgr...</div>
<div class="a" style="left:978px;top:587px;width:1px;height:21px;background:#e3e3e3"></div>
<div class="t" style="left:982px;width:45px;overflow:hidden;top:593px;font-size:11px;color:#000">71706</div>
<div class="a" style="left:1028px;top:587px;width:1px;height:21px;background:#e3e3e3"></div>
<div class="t" style="left:1032px;width:70px;overflow:hidden;top:593px;font-size:11px;color:#000">Markgrönin...</div>
<div class="a" style="left:1103px;top:587px;width:1px;height:21px;background:#e3e3e3"></div>
<div class="t" style="left:1103px;width:73px;text-align:right;top:593px;font-size:11px;color:#000">160,54</div>
<div class="a" style="left:1179px;top:587px;width:1px;height:21px;background:#e3e3e3"></div>
<div class="t" style="left:1179px;width:74px;text-align:right;top:593px;font-size:11px;color:#000">0,00</div>
<div class="a" style="left:1256px;top:587px;width:1px;height:21px;background:#e3e3e3"></div>
<div class="t" style="left:1256px;width:57px;text-align:right;top:593px;font-size:11px;color:#000">160,54</div>
<div class="a" style="left:1316px;top:587px;width:1px;height:21px;background:#e3e3e3"></div>
<div class="t" style="left:1316px;width:82px;text-align:right;top:593px;font-size:11px;color:#000">0,00</div>
<div class="a" style="left:1401px;top:587px;width:1px;height:21px;background:#e3e3e3"></div>
<div class="t" style="left:1401px;width:76px;text-align:right;top:593px;font-size:11px;color:#000">3.467,70</div>
<div class="a" style="left:1480px;top:587px;width:1px;height:21px;background:#e3e3e3"></div>
<div class="t" style="left:1480px;width:76px;text-align:right;top:593px;font-size:11px;color:#000">0,00</div>
<div class="a" style="left:1559px;top:587px;width:1px;height:21px;background:#e3e3e3"></div>
<div class="t" style="left:1559px;width:80px;text-align:right;top:593px;font-size:11px;color:#000">3.467,70</div>
<div class="a" style="left:1642px;top:587px;width:1px;height:21px;background:#e3e3e3"></div>
<div class="t" style="left:1642px;width:79px;text-align:right;top:593px;font-size:11px;color:#000">17.898,08</div>
<div class="a" style="left:1724px;top:587px;width:1px;height:21px;background:#e3e3e3"></div>
<div class="t" style="left:1724px;width:79px;text-align:right;top:593px;font-size:11px;color:#000">0,00</div>
<div class="a" style="left:1806px;top:587px;width:1px;height:21px;background:#e3e3e3"></div>
<div class="t" style="left:1806px;width:79px;text-align:right;top:593px;font-size:11px;color:#000">17.898,08</div>
<div class="a" style="left:1888px;top:587px;width:1px;height:21px;background:#e3e3e3"></div>
<div class="a" style="left:112px;top:608px;width:36px;height:22px;background:linear-gradient(#fdfdfd,#eceded 40%,#d6d7db);border:1px solid #76777b;box-shadow:inset 1px 1px 0 #fff"></div>
<div class="t" style="left:112px;width:30px;text-align:right;top:614px;font-size:11px;color:#000">12</div>
<div class="a" style="left:147px;top:629px;width:1741px;height:1px;background:#e3e3e3"></div>
<div class="t" style="left:147px;width:58px;text-align:right;top:614px;font-size:11px;color:#000">99200005</div>
<div class="a" style="left:208px;top:608px;width:1px;height:21px;background:#e3e3e3"></div>
<div class="t" style="left:212px;width:50px;overflow:hidden;top:614px;font-size:11px;color:#000">Offen</div>
<div class="a" style="left:263px;top:608px;width:1px;height:21px;background:#e3e3e3"></div>
<div class="t" style="left:267px;width:62px;overflow:hidden;top:614px;font-size:11px;color:#000">28.03.2017</div>
<div class="a" style="left:330px;top:608px;width:1px;height:21px;background:#e3e3e3"></div>
<div class="t" style="left:334px;width:62px;overflow:hidden;top:614px;font-size:11px;color:#000">Heizung</div>
<div class="a" style="left:397px;top:608px;width:1px;height:21px;background:#e3e3e3"></div>
<div class="a" style="left:510px;top:608px;width:1px;height:21px;background:#e3e3e3"></div>
<div class="t" style="left:514px;width:47px;overflow:hidden;top:614px;font-size:11px;color:#000">10123</div>
<div class="a" style="left:562px;top:608px;width:1px;height:21px;background:#e3e3e3"></div>
<div class="t" style="left:566px;width:115px;overflow:hidden;top:614px;font-size:11px;color:#000">Firma  Kurt Müller & C...</div>
<div class="a" style="left:682px;top:608px;width:1px;height:21px;background:#e3e3e3"></div>
<div class="t" style="left:686px;width:45px;overflow:hidden;top:614px;font-size:11px;color:#000">70736</div>
<div class="a" style="left:732px;top:608px;width:1px;height:21px;background:#e3e3e3"></div>
<div class="t" style="left:736px;width:70px;overflow:hidden;top:614px;font-size:11px;color:#000">Fellbach</div>
<div class="a" style="left:807px;top:608px;width:1px;height:21px;background:#e3e3e3"></div>
<div class="a" style="left:858px;top:608px;width:1px;height:21px;background:#e3e3e3"></div>
<div class="a" style="left:978px;top:608px;width:1px;height:21px;background:#e3e3e3"></div>
<div class="a" style="left:1028px;top:608px;width:1px;height:21px;background:#e3e3e3"></div>
<div class="a" style="left:1103px;top:608px;width:1px;height:21px;background:#e3e3e3"></div>
<div class="t" style="left:1103px;width:73px;text-align:right;top:614px;font-size:11px;color:#000">160,63</div>
<div class="a" style="left:1179px;top:608px;width:1px;height:21px;background:#e3e3e3"></div>
<div class="t" style="left:1179px;width:74px;text-align:right;top:614px;font-size:11px;color:#000">0,00</div>
<div class="a" style="left:1256px;top:608px;width:1px;height:21px;background:#e3e3e3"></div>
<div class="t" style="left:1256px;width:57px;text-align:right;top:614px;font-size:11px;color:#000">160,63</div>
<div class="a" style="left:1316px;top:608px;width:1px;height:21px;background:#e3e3e3"></div>
<div class="t" style="left:1316px;width:82px;text-align:right;top:614px;font-size:11px;color:#000">0,00</div>
<div class="a" style="left:1401px;top:608px;width:1px;height:21px;background:#e3e3e3"></div>
<div class="t" style="left:1401px;width:76px;text-align:right;top:614px;font-size:11px;color:#000">3.448,08</div>
<div class="a" style="left:1480px;top:608px;width:1px;height:21px;background:#e3e3e3"></div>
<div class="t" style="left:1480px;width:76px;text-align:right;top:614px;font-size:11px;color:#000">0,00</div>
<div class="a" style="left:1559px;top:608px;width:1px;height:21px;background:#e3e3e3"></div>
<div class="t" style="left:1559px;width:80px;text-align:right;top:614px;font-size:11px;color:#000">3.448,08</div>
<div class="a" style="left:1642px;top:608px;width:1px;height:21px;background:#e3e3e3"></div>
<div class="t" style="left:1642px;width:79px;text-align:right;top:614px;font-size:11px;color:#000">3.369,92</div>
<div class="a" style="left:1724px;top:608px;width:1px;height:21px;background:#e3e3e3"></div>
<div class="t" style="left:1724px;width:79px;text-align:right;top:614px;font-size:11px;color:#000">0,00</div>
<div class="a" style="left:1806px;top:608px;width:1px;height:21px;background:#e3e3e3"></div>
<div class="t" style="left:1806px;width:79px;text-align:right;top:614px;font-size:11px;color:#000">3.369,92</div>
<div class="a" style="left:1888px;top:608px;width:1px;height:21px;background:#e3e3e3"></div>
<div class="a" style="left:112px;top:629px;width:36px;height:22px;background:linear-gradient(#fdfdfd,#eceded 40%,#d6d7db);border:1px solid #76777b;box-shadow:inset 1px 1px 0 #fff"></div>
<div class="t" style="left:112px;width:30px;text-align:right;top:635px;font-size:11px;color:#000">13</div>
<div class="a" style="left:147px;top:650px;width:1741px;height:1px;background:#e3e3e3"></div>
<div class="t" style="left:147px;width:58px;text-align:right;top:635px;font-size:11px;color:#000">99200008</div>
<div class="a" style="left:209px;top:630px;width:54px;height:20px;background:#c6e1a6"></div>
<div class="a" style="left:208px;top:629px;width:1px;height:21px;background:#e3e3e3"></div>
<div class="t" style="left:212px;width:50px;overflow:hidden;top:635px;font-size:11px;color:#000">Erledigt</div>
<div class="a" style="left:263px;top:629px;width:1px;height:21px;background:#e3e3e3"></div>
<div class="t" style="left:267px;width:62px;overflow:hidden;top:635px;font-size:11px;color:#000">11.03.2017</div>
<div class="a" style="left:330px;top:629px;width:1px;height:21px;background:#e3e3e3"></div>
<div class="t" style="left:334px;width:62px;overflow:hidden;top:635px;font-size:11px;color:#000">eltefa</div>
<div class="a" style="left:397px;top:629px;width:1px;height:21px;background:#e3e3e3"></div>
<div class="a" style="left:510px;top:629px;width:1px;height:21px;background:#e3e3e3"></div>
<div class="t" style="left:514px;width:47px;overflow:hidden;top:635px;font-size:11px;color:#000">10123</div>
<div class="a" style="left:562px;top:629px;width:1px;height:21px;background:#e3e3e3"></div>
<div class="t" style="left:566px;width:115px;overflow:hidden;top:635px;font-size:11px;color:#000">Firma  Kurt Müller & C...</div>
<div class="a" style="left:682px;top:629px;width:1px;height:21px;background:#e3e3e3"></div>
<div class="t" style="left:686px;width:45px;overflow:hidden;top:635px;font-size:11px;color:#000">70736</div>
<div class="a" style="left:732px;top:629px;width:1px;height:21px;background:#e3e3e3"></div>
<div class="t" style="left:736px;width:70px;overflow:hidden;top:635px;font-size:11px;color:#000">Fellbach</div>
<div class="a" style="left:807px;top:629px;width:1px;height:21px;background:#e3e3e3"></div>
<div class="a" style="left:858px;top:629px;width:1px;height:21px;background:#e3e3e3"></div>
<div class="a" style="left:978px;top:629px;width:1px;height:21px;background:#e3e3e3"></div>
<div class="a" style="left:1028px;top:629px;width:1px;height:21px;background:#e3e3e3"></div>
<div class="a" style="left:1103px;top:629px;width:1px;height:21px;background:#e3e3e3"></div>
<div class="t" style="left:1103px;width:73px;text-align:right;top:635px;font-size:11px;color:#000">305,12</div>
<div class="a" style="left:1179px;top:629px;width:1px;height:21px;background:#e3e3e3"></div>
<div class="t" style="left:1179px;width:74px;text-align:right;top:635px;font-size:11px;color:#000">173,00</div>
<div class="a" style="left:1256px;top:629px;width:1px;height:21px;background:#e3e3e3"></div>
<div class="t" style="left:1256px;width:57px;text-align:right;top:635px;font-size:11px;color:#000">132,12</div>
<div class="a" style="left:1316px;top:629px;width:1px;height:21px;background:#e3e3e3"></div>
<div class="t" style="left:1316px;width:82px;text-align:right;top:635px;font-size:11px;color:#000">100,00</div>
<div class="a" style="left:1401px;top:629px;width:1px;height:21px;background:#e3e3e3"></div>
<div class="t" style="left:1401px;width:76px;text-align:right;top:635px;font-size:11px;color:#000">9.754,08</div>
<div class="a" style="left:1480px;top:629px;width:1px;height:21px;background:#e3e3e3"></div>
<div class="t" style="left:1480px;width:76px;text-align:right;top:635px;font-size:11px;color:#000">5.324,78</div>
<div class="a" style="left:1559px;top:629px;width:1px;height:21px;background:#e3e3e3"></div>
<div class="t" style="left:1559px;width:80px;text-align:right;top:635px;font-size:11px;color:#000">4.429,30</div>
<div class="a" style="left:1642px;top:629px;width:1px;height:21px;background:#e3e3e3"></div>
<div class="t" style="left:1642px;width:79px;text-align:right;top:635px;font-size:11px;color:#000">5.851,93</div>
<div class="a" style="left:1724px;top:629px;width:1px;height:21px;background:#e3e3e3"></div>
<div class="t" style="left:1724px;width:79px;text-align:right;top:635px;font-size:11px;color:#000">5.925,41</div>
<div class="a" style="left:1807px;top:630px;width:81px;height:20px;background:#f7c6c6"></div>
<div class="a" style="left:1806px;top:629px;width:1px;height:21px;background:#e3e3e3"></div>
<div class="t" style="left:1806px;width:79px;text-align:right;top:635px;font-size:11px;color:#e0001a">-73,48</div>
<div class="a" style="left:1888px;top:629px;width:1px;height:21px;background:#e3e3e3"></div>
<div class="a" style="left:112px;top:650px;width:36px;height:22px;background:linear-gradient(#fdfdfd,#eceded 40%,#d6d7db);border:1px solid #76777b;box-shadow:inset 1px 1px 0 #fff"></div>
<div class="t" style="left:112px;width:30px;text-align:right;top:656px;font-size:11px;color:#000">14</div>
<div class="a" style="left:147px;top:671px;width:1741px;height:1px;background:#e3e3e3"></div>
<div class="t" style="left:147px;width:58px;text-align:right;top:656px;font-size:11px;color:#000">66000028</div>
<div class="a" style="left:208px;top:650px;width:1px;height:21px;background:#e3e3e3"></div>
<div class="t" style="left:212px;width:50px;overflow:hidden;top:656px;font-size:11px;color:#000">Offen</div>
<div class="a" style="left:263px;top:650px;width:1px;height:21px;background:#e3e3e3"></div>
<div class="t" style="left:267px;width:62px;overflow:hidden;top:656px;font-size:11px;color:#000">20.12.2016</div>
<div class="a" style="left:330px;top:650px;width:1px;height:21px;background:#e3e3e3"></div>
<div class="t" style="left:334px;width:62px;overflow:hidden;top:656px;font-size:11px;color:#000">20</div>
<div class="a" style="left:397px;top:650px;width:1px;height:21px;background:#e3e3e3"></div>
<div class="t" style="left:401px;width:108px;overflow:hidden;top:656px;font-size:11px;color:#000">5 - Bühler, Emil</div>
<div class="a" style="left:510px;top:650px;width:1px;height:21px;background:#e3e3e3"></div>
<div class="t" style="left:514px;width:47px;overflow:hidden;top:656px;font-size:11px;color:#000">10103</div>
<div class="a" style="left:562px;top:650px;width:1px;height:21px;background:#e3e3e3"></div>
<div class="t" style="left:566px;width:115px;overflow:hidden;top:656px;font-size:11px;color:#000">Herrn Peter Reiser</div>
<div class="a" style="left:682px;top:650px;width:1px;height:21px;background:#e3e3e3"></div>
<div class="t" style="left:686px;width:45px;overflow:hidden;top:656px;font-size:11px;color:#000">70734</div>
<div class="a" style="left:732px;top:650px;width:1px;height:21px;background:#e3e3e3"></div>
<div class="t" style="left:736px;width:70px;overflow:hidden;top:656px;font-size:11px;color:#000">Fellbach</div>
<div class="a" style="left:807px;top:650px;width:1px;height:21px;background:#e3e3e3"></div>
<div class="t" style="left:811px;width:46px;overflow:hidden;top:656px;font-size:11px;color:#000">10103</div>
<div class="a" style="left:858px;top:650px;width:1px;height:21px;background:#e3e3e3"></div>
<div class="t" style="left:862px;width:115px;overflow:hidden;top:656px;font-size:11px;color:#000">Herrn Peter Reiser</div>
<div class="a" style="left:978px;top:650px;width:1px;height:21px;background:#e3e3e3"></div>
<div class="t" style="left:982px;width:45px;overflow:hidden;top:656px;font-size:11px;color:#000">70734</div>
<div class="a" style="left:1028px;top:650px;width:1px;height:21px;background:#e3e3e3"></div>
<div class="t" style="left:1032px;width:70px;overflow:hidden;top:656px;font-size:11px;color:#000">Fellbach</div>
<div class="a" style="left:1103px;top:650px;width:1px;height:21px;background:#e3e3e3"></div>
<div class="t" style="left:1103px;width:73px;text-align:right;top:656px;font-size:11px;color:#000">316,22</div>
<div class="a" style="left:1179px;top:650px;width:1px;height:21px;background:#e3e3e3"></div>
<div class="t" style="left:1179px;width:74px;text-align:right;top:656px;font-size:11px;color:#000">34,00</div>
<div class="a" style="left:1256px;top:650px;width:1px;height:21px;background:#e3e3e3"></div>
<div class="t" style="left:1256px;width:57px;text-align:right;top:656px;font-size:11px;color:#000">282,22</div>
<div class="a" style="left:1316px;top:650px;width:1px;height:21px;background:#e3e3e3"></div>
<div class="t" style="left:1316px;width:82px;text-align:right;top:656px;font-size:11px;color:#000">100,00</div>
<div class="a" style="left:1401px;top:650px;width:1px;height:21px;background:#e3e3e3"></div>
<div class="t" style="left:1401px;width:76px;text-align:right;top:656px;font-size:11px;color:#000">16.443,06</div>
<div class="a" style="left:1480px;top:650px;width:1px;height:21px;background:#e3e3e3"></div>
<div class="t" style="left:1480px;width:76px;text-align:right;top:656px;font-size:11px;color:#000">793,60</div>
<div class="a" style="left:1559px;top:650px;width:1px;height:21px;background:#e3e3e3"></div>
<div class="t" style="left:1559px;width:80px;text-align:right;top:656px;font-size:11px;color:#000">15.649,46</div>
<div class="a" style="left:1642px;top:650px;width:1px;height:21px;background:#e3e3e3"></div>
<div class="t" style="left:1642px;width:79px;text-align:right;top:656px;font-size:11px;color:#000">8.497,78</div>
<div class="a" style="left:1724px;top:650px;width:1px;height:21px;background:#e3e3e3"></div>
<div class="t" style="left:1724px;width:79px;text-align:right;top:656px;font-size:11px;color:#000">0,00</div>
<div class="a" style="left:1806px;top:650px;width:1px;height:21px;background:#e3e3e3"></div>
<div class="t" style="left:1806px;width:79px;text-align:right;top:656px;font-size:11px;color:#000">8.497,78</div>
<div class="a" style="left:1888px;top:650px;width:1px;height:21px;background:#e3e3e3"></div>
<div class="a" style="left:112px;top:671px;width:36px;height:22px;background:linear-gradient(#fdfdfd,#eceded 40%,#d6d7db);border:1px solid #76777b;box-shadow:inset 1px 1px 0 #fff"></div>
<div class="t" style="left:112px;width:30px;text-align:right;top:677px;font-size:11px;color:#000">15</div>
<div class="a" style="left:147px;top:692px;width:1741px;height:1px;background:#e3e3e3"></div>
<div class="t" style="left:147px;width:58px;text-align:right;top:677px;font-size:11px;color:#000">61000138</div>
<div class="a" style="left:209px;top:672px;width:54px;height:20px;background:#c6e1a6"></div>
<div class="a" style="left:208px;top:671px;width:1px;height:21px;background:#e3e3e3"></div>
<div class="t" style="left:212px;width:50px;overflow:hidden;top:677px;font-size:11px;color:#000">Erledigt</div>
<div class="a" style="left:263px;top:671px;width:1px;height:21px;background:#e3e3e3"></div>
<div class="t" style="left:267px;width:62px;overflow:hidden;top:677px;font-size:11px;color:#000">07.08.2016</div>
<div class="a" style="left:330px;top:671px;width:1px;height:21px;background:#e3e3e3"></div>
<div class="t" style="left:334px;width:62px;overflow:hidden;top:677px;font-size:11px;color:#000">Sanitär</div>
<div class="a" style="left:397px;top:671px;width:1px;height:21px;background:#e3e3e3"></div>
<div class="a" style="left:510px;top:671px;width:1px;height:21px;background:#e3e3e3"></div>
<div class="t" style="left:514px;width:47px;overflow:hidden;top:677px;font-size:11px;color:#000">10104</div>
<div class="a" style="left:562px;top:671px;width:1px;height:21px;background:#e3e3e3"></div>
<div class="t" style="left:566px;width:115px;overflow:hidden;top:677px;font-size:11px;color:#000">Herrn Emil Rathenau</div>
<div class="a" style="left:682px;top:671px;width:1px;height:21px;background:#e3e3e3"></div>
<div class="t" style="left:686px;width:45px;overflow:hidden;top:677px;font-size:11px;color:#000">70736</div>
<div class="a" style="left:732px;top:671px;width:1px;height:21px;background:#e3e3e3"></div>
<div class="t" style="left:736px;width:70px;overflow:hidden;top:677px;font-size:11px;color:#000">Fellbach</div>
<div class="a" style="left:807px;top:671px;width:1px;height:21px;background:#e3e3e3"></div>
<div class="a" style="left:858px;top:671px;width:1px;height:21px;background:#e3e3e3"></div>
<div class="a" style="left:978px;top:671px;width:1px;height:21px;background:#e3e3e3"></div>
<div class="a" style="left:1028px;top:671px;width:1px;height:21px;background:#e3e3e3"></div>
<div class="a" style="left:1103px;top:671px;width:1px;height:21px;background:#e3e3e3"></div>
<div class="t" style="left:1103px;width:73px;text-align:right;top:677px;font-size:11px;color:#000">8,20</div>
<div class="a" style="left:1179px;top:671px;width:1px;height:21px;background:#e3e3e3"></div>
<div class="t" style="left:1179px;width:74px;text-align:right;top:677px;font-size:11px;color:#000">0,00</div>
<div class="a" style="left:1256px;top:671px;width:1px;height:21px;background:#e3e3e3"></div>
<div class="t" style="left:1256px;width:57px;text-align:right;top:677px;font-size:11px;color:#000">8,20</div>
<div class="a" style="left:1316px;top:671px;width:1px;height:21px;background:#e3e3e3"></div>
<div class="t" style="left:1316px;width:82px;text-align:right;top:677px;font-size:11px;color:#000">0,00</div>
<div class="a" style="left:1401px;top:671px;width:1px;height:21px;background:#e3e3e3"></div>
<div class="t" style="left:1401px;width:76px;text-align:right;top:677px;font-size:11px;color:#000">176,15</div>
<div class="a" style="left:1480px;top:671px;width:1px;height:21px;background:#e3e3e3"></div>
<div class="t" style="left:1480px;width:76px;text-align:right;top:677px;font-size:11px;color:#000">0,00</div>
<div class="a" style="left:1559px;top:671px;width:1px;height:21px;background:#e3e3e3"></div>
<div class="t" style="left:1559px;width:80px;text-align:right;top:677px;font-size:11px;color:#000">176,15</div>
<div class="a" style="left:1642px;top:671px;width:1px;height:21px;background:#e3e3e3"></div>
<div class="t" style="left:1642px;width:79px;text-align:right;top:677px;font-size:11px;color:#000">293,25</div>
<div class="a" style="left:1724px;top:671px;width:1px;height:21px;background:#e3e3e3"></div>
<div class="t" style="left:1724px;width:79px;text-align:right;top:677px;font-size:11px;color:#000">0,00</div>
<div class="a" style="left:1806px;top:671px;width:1px;height:21px;background:#e3e3e3"></div>
<div class="t" style="left:1806px;width:79px;text-align:right;top:677px;font-size:11px;color:#000">293,25</div>
<div class="a" style="left:1888px;top:671px;width:1px;height:21px;background:#e3e3e3"></div>
<div class="a" style="left:112px;top:692px;width:36px;height:22px;background:linear-gradient(#fdfdfd,#eceded 40%,#d6d7db);border:1px solid #76777b;box-shadow:inset 1px 1px 0 #fff"></div>
<div class="t" style="left:112px;width:30px;text-align:right;top:698px;font-size:11px;color:#000">16</div>
<div class="a" style="left:147px;top:713px;width:1741px;height:1px;background:#e3e3e3"></div>
<div class="t" style="left:147px;width:58px;text-align:right;top:698px;font-size:11px;color:#000">21600001</div>
<div class="a" style="left:208px;top:692px;width:1px;height:21px;background:#e3e3e3"></div>
<div class="t" style="left:212px;width:50px;overflow:hidden;top:698px;font-size:11px;color:#000">Offen</div>
<div class="a" style="left:263px;top:692px;width:1px;height:21px;background:#e3e3e3"></div>
<div class="t" style="left:267px;width:62px;overflow:hidden;top:698px;font-size:11px;color:#000">02.05.2016</div>
<div class="a" style="left:330px;top:692px;width:1px;height:21px;background:#e3e3e3"></div>
<div class="t" style="left:334px;width:62px;overflow:hidden;top:698px;font-size:11px;color:#000">20</div>
<div class="a" style="left:397px;top:692px;width:1px;height:21px;background:#e3e3e3"></div>
<div class="a" style="left:510px;top:692px;width:1px;height:21px;background:#e3e3e3"></div>
<div class="t" style="left:514px;width:47px;overflow:hidden;top:698px;font-size:11px;color:#000">10161</div>
<div class="a" style="left:562px;top:692px;width:1px;height:21px;background:#e3e3e3"></div>
<div class="t" style="left:566px;width:115px;overflow:hidden;top:698px;font-size:11px;color:#000">Herr Roland Dehm</div>
<div class="a" style="left:682px;top:692px;width:1px;height:21px;background:#e3e3e3"></div>
<div class="t" style="left:686px;width:45px;overflow:hidden;top:698px;font-size:11px;color:#000">71034</div>
<div class="a" style="left:732px;top:692px;width:1px;height:21px;background:#e3e3e3"></div>
<div class="t" style="left:736px;width:70px;overflow:hidden;top:698px;font-size:11px;color:#000">Böblingen</div>
<div class="a" style="left:807px;top:692px;width:1px;height:21px;background:#e3e3e3"></div>
<div class="t" style="left:811px;width:46px;overflow:hidden;top:698px;font-size:11px;color:#000">10161</div>
<div class="a" style="left:858px;top:692px;width:1px;height:21px;background:#e3e3e3"></div>
<div class="t" style="left:862px;width:115px;overflow:hidden;top:698px;font-size:11px;color:#000">Herr Roland Dehm</div>
<div class="a" style="left:978px;top:692px;width:1px;height:21px;background:#e3e3e3"></div>
<div class="t" style="left:982px;width:45px;overflow:hidden;top:698px;font-size:11px;color:#000">71034</div>
<div class="a" style="left:1028px;top:692px;width:1px;height:21px;background:#e3e3e3"></div>
<div class="t" style="left:1032px;width:70px;overflow:hidden;top:698px;font-size:11px;color:#000">Böblingen</div>
<div class="a" style="left:1103px;top:692px;width:1px;height:21px;background:#e3e3e3"></div>
<div class="t" style="left:1103px;width:73px;text-align:right;top:698px;font-size:11px;color:#000">16,30</div>
<div class="a" style="left:1179px;top:692px;width:1px;height:21px;background:#e3e3e3"></div>
<div class="t" style="left:1179px;width:74px;text-align:right;top:698px;font-size:11px;color:#000">0,00</div>
<div class="a" style="left:1256px;top:692px;width:1px;height:21px;background:#e3e3e3"></div>
<div class="t" style="left:1256px;width:57px;text-align:right;top:698px;font-size:11px;color:#000">16,30</div>
<div class="a" style="left:1316px;top:692px;width:1px;height:21px;background:#e3e3e3"></div>
<div class="t" style="left:1316px;width:82px;text-align:right;top:698px;font-size:11px;color:#000">0,00</div>
<div class="a" style="left:1401px;top:692px;width:1px;height:21px;background:#e3e3e3"></div>
<div class="t" style="left:1401px;width:76px;text-align:right;top:698px;font-size:11px;color:#000">423,72</div>
<div class="a" style="left:1480px;top:692px;width:1px;height:21px;background:#e3e3e3"></div>
<div class="t" style="left:1480px;width:76px;text-align:right;top:698px;font-size:11px;color:#000">0,00</div>
<div class="a" style="left:1559px;top:692px;width:1px;height:21px;background:#e3e3e3"></div>
<div class="t" style="left:1559px;width:80px;text-align:right;top:698px;font-size:11px;color:#000">423,72</div>
<div class="a" style="left:1642px;top:692px;width:1px;height:21px;background:#e3e3e3"></div>
<div class="t" style="left:1642px;width:79px;text-align:right;top:698px;font-size:11px;color:#000">0,00</div>
<div class="a" style="left:1724px;top:692px;width:1px;height:21px;background:#e3e3e3"></div>
<div class="t" style="left:1724px;width:79px;text-align:right;top:698px;font-size:11px;color:#000">0,00</div>
<div class="a" style="left:1806px;top:692px;width:1px;height:21px;background:#e3e3e3"></div>
<div class="t" style="left:1806px;width:79px;text-align:right;top:698px;font-size:11px;color:#000">0,00</div>
<div class="a" style="left:1888px;top:692px;width:1px;height:21px;background:#e3e3e3"></div>
<div class="a" style="left:112px;top:713px;width:36px;height:22px;background:linear-gradient(#fdfdfd,#eceded 40%,#d6d7db);border:1px solid #76777b;box-shadow:inset 1px 1px 0 #fff"></div>
<div class="t" style="left:112px;width:30px;text-align:right;top:719px;font-size:11px;color:#000">17</div>
<div class="a" style="left:147px;top:734px;width:1741px;height:1px;background:#e3e3e3"></div>
<div class="t" style="left:147px;width:58px;text-align:right;top:719px;font-size:11px;color:#000">66000031</div>
<div class="a" style="left:208px;top:713px;width:1px;height:21px;background:#e3e3e3"></div>
<div class="t" style="left:212px;width:50px;overflow:hidden;top:719px;font-size:11px;color:#000">Offen</div>
<div class="a" style="left:263px;top:713px;width:1px;height:21px;background:#e3e3e3"></div>
<div class="t" style="left:267px;width:62px;overflow:hidden;top:719px;font-size:11px;color:#000">06.06.2015</div>
<div class="a" style="left:330px;top:713px;width:1px;height:21px;background:#e3e3e3"></div>
<div class="t" style="left:334px;width:62px;overflow:hidden;top:719px;font-size:11px;color:#000">20</div>
<div class="a" style="left:397px;top:713px;width:1px;height:21px;background:#e3e3e3"></div>
<div class="a" style="left:510px;top:713px;width:1px;height:21px;background:#e3e3e3"></div>
<div class="t" style="left:514px;width:47px;overflow:hidden;top:719px;font-size:11px;color:#000">10141</div>
<div class="a" style="left:562px;top:713px;width:1px;height:21px;background:#e3e3e3"></div>
<div class="t" style="left:566px;width:115px;overflow:hidden;top:719px;font-size:11px;color:#000">Frau Inge Rühle</div>
<div class="a" style="left:682px;top:713px;width:1px;height:21px;background:#e3e3e3"></div>
<div class="t" style="left:686px;width:45px;overflow:hidden;top:719px;font-size:11px;color:#000">70327</div>
<div class="a" style="left:732px;top:713px;width:1px;height:21px;background:#e3e3e3"></div>
<div class="t" style="left:736px;width:70px;overflow:hidden;top:719px;font-size:11px;color:#000">Stuttgart</div>
<div class="a" style="left:807px;top:713px;width:1px;height:21px;background:#e3e3e3"></div>
<div class="t" style="left:811px;width:46px;overflow:hidden;top:719px;font-size:11px;color:#000">10141</div>
<div class="a" style="left:858px;top:713px;width:1px;height:21px;background:#e3e3e3"></div>
<div class="t" style="left:862px;width:115px;overflow:hidden;top:719px;font-size:11px;color:#000">Frau Inge Rühle</div>
<div class="a" style="left:978px;top:713px;width:1px;height:21px;background:#e3e3e3"></div>
<div class="t" style="left:982px;width:45px;overflow:hidden;top:719px;font-size:11px;color:#000">70327</div>
<div class="a" style="left:1028px;top:713px;width:1px;height:21px;background:#e3e3e3"></div>
<div class="t" style="left:1032px;width:70px;overflow:hidden;top:719px;font-size:11px;color:#000">Stuttgart</div>
<div class="a" style="left:1103px;top:713px;width:1px;height:21px;background:#e3e3e3"></div>
<div class="t" style="left:1103px;width:73px;text-align:right;top:719px;font-size:11px;color:#000">2,00</div>
<div class="a" style="left:1179px;top:713px;width:1px;height:21px;background:#e3e3e3"></div>
<div class="t" style="left:1179px;width:74px;text-align:right;top:719px;font-size:11px;color:#000">10,00</div>
<div class="a" style="left:1257px;top:714px;width:59px;height:20px;background:#f7c6c6"></div>
<div class="a" style="left:1256px;top:713px;width:1px;height:21px;background:#e3e3e3"></div>
<div class="t" style="left:1256px;width:57px;text-align:right;top:719px;font-size:11px;color:#e0001a">-8,00</div>
<div class="a" style="left:1316px;top:713px;width:1px;height:21px;background:#e3e3e3"></div>
<div class="t" style="left:1316px;width:82px;text-align:right;top:719px;font-size:11px;color:#000">100,00</div>
<div class="a" style="left:1401px;top:713px;width:1px;height:21px;background:#e3e3e3"></div>
<div class="t" style="left:1401px;width:76px;text-align:right;top:719px;font-size:11px;color:#000">50,74</div>
<div class="a" style="left:1480px;top:713px;width:1px;height:21px;background:#e3e3e3"></div>
<div class="t" style="left:1480px;width:76px;text-align:right;top:719px;font-size:11px;color:#000">248,00</div>
<div class="a" style="left:1560px;top:714px;width:82px;height:20px;background:#f7c6c6"></div>
<div class="a" style="left:1559px;top:713px;width:1px;height:21px;background:#e3e3e3"></div>
<div class="t" style="left:1559px;width:80px;text-align:right;top:719px;font-size:11px;color:#e0001a">-197,26</div>
<div class="a" style="left:1642px;top:713px;width:1px;height:21px;background:#e3e3e3"></div>
<div class="t" style="left:1642px;width:79px;text-align:right;top:719px;font-size:11px;color:#000">0,00</div>
<div class="a" style="left:1724px;top:713px;width:1px;height:21px;background:#e3e3e3"></div>
<div class="t" style="left:1724px;width:79px;text-align:right;top:719px;font-size:11px;color:#000">0,00</div>
<div class="a" style="left:1806px;top:713px;width:1px;height:21px;background:#e3e3e3"></div>
<div class="t" style="left:1806px;width:79px;text-align:right;top:719px;font-size:11px;color:#000">0,00</div>
<div class="a" style="left:1888px;top:713px;width:1px;height:21px;background:#e3e3e3"></div>
<div class="a" style="left:112px;top:982px;width:1788px;height:26px;background:linear-gradient(#fbfbfc,#e9eaec 60%,#d5d7da);border:1px solid #7a7d82"></div>
<div class="a" style="left:1105px;top:984px;width:74px;height:22px;background:linear-gradient(#f6f6f7,#e8e9eb);border:1px solid #c1c3c6"></div>
<div class="t" style="left:1105px;width:70px;text-align:right;top:990px;font-size:11px;color:#000">Σ=7.213,55</div>
<div class="a" style="left:1181px;top:984px;width:75px;height:22px;background:linear-gradient(#f6f6f7,#e8e9eb);border:1px solid #c1c3c6"></div>
<div class="t" style="left:1181px;width:71px;text-align:right;top:990px;font-size:11px;color:#000">Σ=5.016,45</div>
<div class="a" style="left:1258px;top:984px;width:58px;height:22px;background:linear-gradient(#f6f6f7,#e8e9eb);border:1px solid #c1c3c6"></div>
<div class="t" style="left:1261px;top:990px;font-size:11px;color:#000">Σ=2.197...</div>
<div class="a" style="left:1403px;top:984px;width:77px;height:22px;background:linear-gradient(#f6f6f7,#e8e9eb);border:1px solid #c1c3c6"></div>
<div class="t" style="left:1403px;width:73px;text-align:right;top:990px;font-size:11px;color:#000">Σ=148.745,44</div>
<div class="a" style="left:1482px;top:984px;width:77px;height:22px;background:linear-gradient(#f6f6f7,#e8e9eb);border:1px solid #c1c3c6"></div>
<div class="t" style="left:1482px;width:73px;text-align:right;top:990px;font-size:11px;color:#000">Σ=176.882,36</div>
<div class="a" style="left:1562px;top:984px;width:80px;height:22px;background:linear-gradient(#f6f6f7,#e8e9eb);border:1px solid #c1c3c6"></div>
<div class="t" style="left:1562px;width:76px;text-align:right;top:990px;font-size:11px;color:#000">Σ=-28.136,92</div>
<div class="a" style="left:1645px;top:984px;width:79px;height:22px;background:linear-gradient(#f6f6f7,#e8e9eb);border:1px solid #c1c3c6"></div>
<div class="t" style="left:1645px;width:75px;text-align:right;top:990px;font-size:11px;color:#000">Σ=331.101,05</div>
<div class="a" style="left:1727px;top:984px;width:79px;height:22px;background:linear-gradient(#f6f6f7,#e8e9eb);border:1px solid #c1c3c6"></div>
<div class="t" style="left:1727px;width:75px;text-align:right;top:990px;font-size:11px;color:#000">Σ=69.924,84</div>
<div class="a" style="left:1809px;top:984px;width:79px;height:22px;background:linear-gradient(#f6f6f7,#e8e9eb);border:1px solid #c1c3c6"></div>
<div class="t" style="left:1809px;width:75px;text-align:right;top:990px;font-size:11px;color:#000">Σ=261.176,21</div>
<svg class="a" style="left:0;top:0" width="830" height="100">
<circle cx="61" cy="78" r="12.5" fill="#f9ef86" stroke="#24408c" stroke-width="1.6"/><path d="M61 68.5V78L65.5 82" fill="none" stroke="#5048c8" stroke-width="1.8"/><path d="M50.5 78H53.5M68.5 78H71.5M61 86.5V89.0" stroke="#8070d0" stroke-width="1.4"/>
<path d="M43.5 61.5L50 68" stroke="#e85a20" stroke-width="3.2"/><path d="M50 68L51.5 69.5" stroke="#333" stroke-width="1.5"/>
<circle cx="160" cy="78" r="12.5" fill="#f9ef86" stroke="#24408c" stroke-width="1.6"/><path d="M160 68.5V78L164.5 82" fill="none" stroke="#5048c8" stroke-width="1.8"/><path d="M149.5 78H152.5M167.5 78H170.5M160 86.5V89.0" stroke="#8070d0" stroke-width="1.4"/>
<rect x="141.5" y="60.5" width="7" height="9" fill="#d8ecf8" stroke="#222" stroke-width="1.2"/><path d="M144 63.5H146M144 66.5H146" stroke="#555" stroke-width="1.2"/>
<g transform="translate(234,61)"><path d="M0 12L6 0H31L25 12Z" fill="#e8f6e4" stroke="#38b050" stroke-width="1"/><path d="M0 12H25L31 0V4L25 16H0Z" fill="#48b860" stroke="#2a9a40" stroke-width="0.8"/><path d="M1 14H25L31 3" fill="none" stroke="#e0f0e0" stroke-width="0.8"/><path d="M13 12L18 1" stroke="#f2c010" stroke-width="3"/><rect x="11" y="11" width="4" height="5" fill="#f2c010"/><circle cx="9" cy="6" r="2.5" fill="none" stroke="#38a050" stroke-width="1"/><path d="M20 5H27M19 8H26" stroke="#38a050" stroke-width="1"/></g>
<g font-family="Liberation Sans" font-weight="bold" font-style="italic" font-size="16.5" fill="#000" stroke="#fff" stroke-width="0.6" paint-order="stroke"><text x="234.5" y="90">L</text><text x="250" y="90">B</text></g>
<circle cx="333" cy="79" r="12.5" fill="#f9ef86" stroke="#24408c" stroke-width="1.6"/><path d="M333 69.5V79L337.5 83" fill="none" stroke="#5048c8" stroke-width="1.8"/><path d="M322.5 79H325.5M340.5 79H343.5M333 87.5V90.0" stroke="#8070d0" stroke-width="1.4"/>
<path d="M315.5 61.5L322 68" stroke="#e85a20" stroke-width="3.2"/>
<path d="M316.5 70V92" stroke="#2a1a10" stroke-width="3" stroke-dasharray="2.5 3"/>
<path d="M418 73L427 69L441 70L434 76Z" fill="#8a6534"/><path d="M426 76C425 70 428 66 432 64L430 61L440 64L439 73L436 69C433 71 431 73 432 76Z" fill="#12b012"/><path d="M426 76C426 72 427 69 430 67L432 70C430 72 430 74 431 76Z" fill="#0a8a0a"/><path d="M434 76L442 71L443 79L441 84L434 89Z" fill="#b8955a"/><path d="M417 78L434 80V89L417 87Z" fill="#c6a466"/><path d="M413 82L418 74L435 76L432 84Z" fill="#d6b574" stroke="#b39050" stroke-width="0.6"/>
<path d="M522 62.5H545.5V67H532L539 75L531.5 83H545.5V87.5H521.5V84L530 75L522 66Z" fill="#101040"/>
<g transform="translate(628,61)"><path d="M0 12L6 0H31L25 12Z" fill="#e8f6e4" stroke="#38b050" stroke-width="1"/><path d="M0 12H25L31 0V4L25 16H0Z" fill="#48b860" stroke="#2a9a40" stroke-width="0.8"/><path d="M1 14H25L31 3" fill="none" stroke="#e0f0e0" stroke-width="0.8"/><path d="M13 12L18 1" stroke="#f2c010" stroke-width="3"/><rect x="11" y="11" width="4" height="5" fill="#f2c010"/><circle cx="9" cy="6" r="2.5" fill="none" stroke="#38a050" stroke-width="1"/><path d="M20 5H27M19 8H26" stroke="#38a050" stroke-width="1"/></g>
<g font-family="Liberation Sans" font-weight="bold" font-style="italic" font-size="15.5" fill="#000" stroke="#fff" stroke-width="0.6" paint-order="stroke"><text x="629" y="89.5">R</text><text x="645" y="89.5">B</text></g>
<defs><clipPath id="bwc"><circle cx="765" cy="75.2" r="13.2"/></clipPath><linearGradient id="bwr" x1="0" y1="0" x2="1" y2="1"><stop offset="0" stop-color="#78f0a0"/><stop offset="1" stop-color="#5aa8e8"/></linearGradient></defs>
<circle cx="765.8" cy="76.2" r="15" fill="#1a1a1a" opacity="0.45"/>
<circle cx="765" cy="75.2" r="14" fill="#0e2e88" stroke="url(#bwr)" stroke-width="1.7"/>
<g clip-path="url(#bwc)"><path d="M750 65.3H781M750 68.3H781M750 71.3H781M750 74.3H781M750 77.3H781M750 80.3H781M750 83.3H781" stroke="#fff" stroke-width="1.1"/><path d="M764 67.5C767 65.5 772 66 773 69L773 73L771 75L773 77L770.5 79L771 82L768 84L770 87L767 89L763 85L764 81L765 76L763 74Z" fill="#fff"/><path d="M757 79L763 89M760 78L766 88M771 86L775 84" stroke="#fff" stroke-width="1.2"/><path d="M766 76L769 76M767 79L769 80" stroke="#0e2e88" stroke-width="1"/></g>
</svg>
<svg class="a" style="left:0;top:0" width="440" height="52">
<path d="M46 -1C52 3 55 10 55.5 22H403C410 22 414 17 414 10C414 4 411 1 408 -1Z" fill="#f4f6f9" stroke="#c9cdd3"/>
<path d="M184.5 2V20M240.5 2V20M346.5 2V20M377.5 2V20" stroke="#e6e9ee"/>
<defs><linearGradient id="lg2" x1="0" y1="0" x2="0" y2="1"><stop offset="0" stop-color="#3aa0e8"/><stop offset="1" stop-color="#1a6ad0"/></linearGradient><clipPath id="lgc"><circle cx="25.1" cy="25.1" r="15"/></clipPath></defs>
<circle cx="25.4" cy="25.8" r="18.3" fill="#222" opacity="0.3"/>
<circle cx="25.1" cy="25.1" r="17.6" fill="#f4f4f4" stroke="#9a9a9a" stroke-width="0.8"/>
<circle cx="25.1" cy="25.1" r="15.3" fill="#c8c8c8"/>
<g clip-path="url(#lgc)"><rect x="9" y="9" width="33" height="33" fill="url(#lg2)"/><rect x="23" y="9" width="6" height="33" fill="#a8d4f4" opacity="0.8"/><rect x="9" y="22" width="33" height="6" fill="#a8d4f4" opacity="0.8"/></g>
<rect x="16" y="15" width="19.5" height="19.8" fill="#eaf6e4" stroke="#9ee070" stroke-width="1.2"/>
<path d="M18 16.8H23V22.6H28.8V16.8H33.9V33.2H28.8V27.4H23V33.2H18Z" fill="#000"/>
<path d="M63.5 5.5H72V19.5H63.5Z" fill="#f0f0f0" stroke="#999"/><circle cx="71.5" cy="6.5" r="4.5" fill="#20b030"/><path d="M71.5 4V9M69 6.5H74" stroke="#fff" stroke-width="1.5"/>
<rect x="86.5" y="3.5" width="13" height="14" fill="#8ab0f0" stroke="#3a6ad0"/><rect x="89" y="4" width="8" height="5" fill="#e8f0fa"/><rect x="90" y="12" width="7" height="5" fill="#2a4a90"/>
<g transform="translate(-447,-5)"><path d="M559.5 7.5H569V19H559.5Z" fill="#f6f6f6" stroke="#9a9a9a"/><path d="M561.5 10H566M561.5 12.5H567M561.5 15H566" stroke="#3a6ad0" stroke-width="0.9"/><circle cx="557.5" cy="21.3" r="2.3" fill="#a8c8f0" stroke="#223" stroke-width="1.1"/><circle cx="562.5" cy="21.3" r="2.3" fill="#a8c8f0" stroke="#223" stroke-width="1.1"/><path d="M559 18.5L563 16.5L567 18M564.5 20L569 16L571 16.5" fill="none" stroke="#222" stroke-width="0.9"/></g>
<g transform="translate(0,-5)"><rect x="139.5" y="6.5" width="9" height="6" fill="#f4f4f4" stroke="#999"/><rect x="136" y="11.5" width="15" height="8" rx="1.5" fill="#8a8a8a"/><rect x="137" y="12" width="13" height="1.5" fill="#b8b8b8"/><path d="M138 19.5H149L148 22.5H137Z" fill="#fafafa" stroke="#9a9a9a" stroke-width="0.8"/><circle cx="147" cy="10.5" r="4.6" fill="#2a4aa8"/><path d="M147.8 7.2L145.8 10.8H148L146.5 13.8" fill="none" stroke="#fff" stroke-width="1.1"/><rect x="163.5" y="6.5" width="9" height="6" fill="#f4f4f4" stroke="#999"/><rect x="160" y="11.5" width="15" height="8" rx="1.5" fill="#8a8a8a"/><rect x="161" y="12" width="13" height="1.5" fill="#b8b8b8"/><path d="M162 19.5H173L172 22.5H161Z" fill="#fafafa" stroke="#9a9a9a" stroke-width="0.8"/><rect x="172" y="13.5" width="2" height="1" fill="#2c2"/></g>
<circle cx="199" cy="10.5" r="6.5" fill="#dfeefa" stroke="#e07040" stroke-width="1.5"/><path d="M196 8L199 11L201.5 7.5M199 11V13" stroke="#3a5aa8" fill="none"/>
<path d="M216.5 6.5H221L222.5 8H230.5V17.5H216.5Z" fill="#3ab0e8" stroke="#123"/><path d="M218 10H232L230 17.5H216.5Z" fill="#7fd4f8"/><circle cx="227" cy="13" r="2" fill="#f0c0a0"/>
<path d="M248.5 8L255 9.5V17L248.5 15.5Z" fill="#fdf4e0" stroke="#b08040"/><path d="M255 9.5L261.5 4V13L255 17Z" fill="#e8b840" stroke="#a07020"/>
<path d="M272.5 3.5H285.5V12.5H272.5Z" fill="#f4f4f4" stroke="#999"/><path d="M272.5 3.5L279 9L285.5 3.5" fill="none" stroke="#999"/><circle cx="282.5" cy="13" r="5" fill="#2a48b8"/><circle cx="282.5" cy="13" r="2.5" fill="none" stroke="#fff"/>
<rect x="299.5" y="2.5" width="11" height="14" fill="#f4f4f8" stroke="#2a3aa8" stroke-width="1.2"/><text x="301" y="13" font-family="Liberation Serif" font-weight="bold" font-style="italic" font-size="9" fill="#2a3aa8">W</text>
<rect x="322.5" y="4.5" width="8" height="10" fill="#e8eaf0" stroke="#aab"/><rect x="327.5" y="8.5" width="9" height="10" fill="#f4f6fa" stroke="#99a"/><path d="M332 12V18M329 15H335" stroke="#20a030" stroke-width="2"/>
<path d="M353 4.5H368L366 18H355Z" fill="#d0d0d0" stroke="#666"/><ellipse cx="360.5" cy="4.5" rx="7.5" ry="2" fill="#555"/><circle cx="360.5" cy="11" r="3" fill="none" stroke="#e02020" stroke-width="1.3"/>
<rect x="384.5" y="4.5" width="14" height="11" rx="1" fill="#eaeef4" stroke="#6a9ae0"/><rect x="385" y="5" width="13" height="2" fill="#8ab8f0"/>
<path d="M420 7H428M420 9.5H428L424 13Z" fill="#333" stroke="#333" stroke-width="0.8"/>
</svg>
<svg class="a" style="left:94px;top:164px" width="640" height="29">
<defs><radialGradient id="bc" cx="0.4" cy="0.3" r="0.8"><stop offset="0" stop-color="#9cc4f4"/><stop offset="0.55" stop-color="#3c6cc4"/><stop offset="1" stop-color="#1e3c8c"/></radialGradient></defs>
<circle cx="22.5" cy="15" r="7" fill="#667" opacity="0.35"/><circle cx="22" cy="14" r="7" fill="url(#bc)"/><path d="M18.5 12.5H25.5L22 17Z M18.5 10.5H25.5V11.5H18.5Z" fill="#fff"/>
<path d="M37 12H43L40 15Z" fill="#111"/>
<path d="M54.5 6.5H63L67 10.5V22.5H54.5Z" fill="#f0f0f0" stroke="#888"/><rect x="58" y="14" width="12" height="9" fill="#fff" stroke="#5a8ad8"/><rect x="58" y="14" width="12" height="3" fill="#7fb0f0"/>
<path d="M154 12H160L157 15Z" fill="#111"/>
<path d="M169.5 9.5H174L176 11.5H183V21.5H169.5Z" fill="#f0d040" stroke="#b09020"/><path d="M171 14H186L183 21.5H169.5Z" fill="#f8e070" stroke="#c0a030"/><path d="M178 9C180 5 184 5 185 8" fill="none" stroke="#2a9a30" stroke-width="1.6"/><path d="M183.5 8.5L186.5 8L186 5Z" fill="#2a9a30"/>
<path d="M312.5 5V24M343.5 5V24" stroke="#f4f6f8" stroke-width="1"/><path d="M311.5 5V24M342.5 5V24" stroke="#9aa2ac" stroke-width="1"/>
<circle cx="326.5" cy="15" r="7" fill="#667" opacity="0.35"/><circle cx="326" cy="14" r="7" fill="url(#bc)"/><path d="M322.5 13A3.8 3.8 0 0 1 329 11.5M329.5 15A3.8 3.8 0 0 1 323 16.5" fill="none" stroke="#fff" stroke-width="1.3"/><path d="M329.5 9V12.5H326Z M322.5 19V15.5H326Z" fill="#fff"/>
<rect x="349.5" y="3.5" width="199" height="21" fill="#fff" stroke="#a0a6ae"/>
<path d="M516 13H522L519 16Z" fill="#222"/>
<circle cx="534.5" cy="11.2" r="3.3" fill="none" stroke="#e07a10" stroke-width="1.6" stroke-dasharray="1.2 1.3"/><circle cx="534.5" cy="11.2" r="1.7999999999999998" fill="none" stroke="#e07a10" stroke-width="1.5"/><circle cx="534.5" cy="11.2" r="0.95" fill="#e8eef8"/><circle cx="539.2" cy="17" r="3.3" fill="none" stroke="#e07a10" stroke-width="1.6" stroke-dasharray="1.2 1.3"/><circle cx="539.2" cy="17" r="1.7999999999999998" fill="none" stroke="#e07a10" stroke-width="1.5"/><circle cx="539.2" cy="17" r="0.95" fill="#e8eef8"/>
<path d="M559.5 7.5H569V19H559.5Z" fill="#f6f6f6" stroke="#9a9a9a"/><path d="M561.5 10H566M561.5 12.5H567M561.5 15H566" stroke="#3a6ad0" stroke-width="0.9"/><circle cx="557.5" cy="21.3" r="2.3" fill="#a8c8f0" stroke="#223" stroke-width="1.1"/><circle cx="562.5" cy="21.3" r="2.3" fill="#a8c8f0" stroke="#223" stroke-width="1.1"/><path d="M559 18.5L563 16.5L567 18M564.5 20L569 16L571 16.5" fill="none" stroke="#222" stroke-width="0.9"/>
<rect x="584.0" y="6.5" width="9" height="6" fill="#f4f4f4" stroke="#999"/><rect x="580.5" y="11.5" width="15" height="8" rx="1.5" fill="#8a8a8a"/><rect x="581.5" y="12" width="13" height="1.5" fill="#b8b8b8"/><path d="M582.5 19.5H593.5L592.5 22.5H581.5Z" fill="#fafafa" stroke="#9a9a9a" stroke-width="0.8"/><circle cx="591.5" cy="10.5" r="4.6" fill="#2a4aa8"/><path d="M592.3 7.2L590.3 10.8H592.5L591.0 13.8" fill="none" stroke="#fff" stroke-width="1.1"/>
<rect x="608.0" y="6.5" width="9" height="6" fill="#f4f4f4" stroke="#999"/><rect x="604.5" y="11.5" width="15" height="8" rx="1.5" fill="#8a8a8a"/><rect x="605.5" y="12" width="13" height="1.5" fill="#b8b8b8"/><path d="M606.5 19.5H617.5L616.5 22.5H605.5Z" fill="#fafafa" stroke="#9a9a9a" stroke-width="0.8"/><rect x="616.5" y="13.5" width="2" height="1" fill="#2c2"/>
</svg>
<div class="t" style="left:168px;top:172px;font-size:12px;color:#111;letter-spacing:-0.2px">Beleg wählen</div>
<div class="t" style="left:283px;top:172px;font-size:12px;color:#111">Projektmappe wählen</div>
<div class="t" style="left:448px;top:173px;font-size:11px;color:#000;letter-spacing:-0.2px">Vergleichsliste Verbrauch</div>
<div class="a" style="left:1781px;top:166px;width:1px;height:24px;background:#f4f6f8"></div>
<svg class="a" style="left:1789px;top:170px" width="16" height="16"><defs><radialGradient id="hg2" cx="0.35" cy="0.3" r="0.8"><stop offset="0" stop-color="#8ec0ff"/><stop offset="0.5" stop-color="#2d6fd6"/><stop offset="1" stop-color="#1c4aa8"/></radialGradient></defs><circle cx="8" cy="8" r="7.2" fill="url(#hg2)"/><text x="8" y="12.5" font-size="11" font-weight="bold" text-anchor="middle" fill="#fff" font-family="Liberation Sans">?</text></svg>
</body></html>
